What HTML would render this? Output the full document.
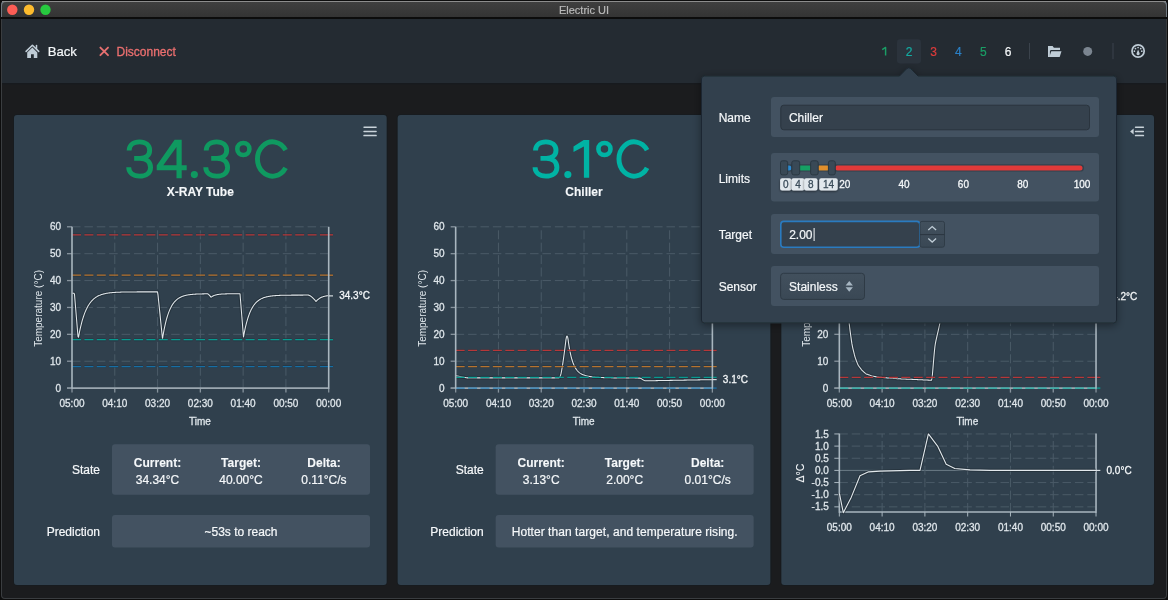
<!DOCTYPE html>
<html><head><meta charset="utf-8"><style>
html,body{margin:0;padding:0;width:1168px;height:600px;overflow:hidden;background:#0d0d0d;font-family:"Liberation Sans", sans-serif;}
text{font-family:"Liberation Sans", sans-serif;}
</style></head><body>
<svg width="1168" height="600" viewBox="0 0 1168 600" font-family='"Liberation Sans", sans-serif' style="position:absolute;left:0;top:0;will-change:transform"><defs><linearGradient id="tb" x1="0" y1="0" x2="0" y2="1"><stop offset="0" stop-color="#3f3f3f"/><stop offset="1" stop-color="#333333"/></linearGradient><filter id="pshadow" x="-10%" y="-10%" width="120%" height="130%"><feDropShadow dx="0" dy="2" stdDeviation="4" flood-color="#000" flood-opacity="0.4"/></filter><filter id="lshadow" x="-30%" y="-30%" width="160%" height="160%"><feDropShadow dx="0" dy="1" stdDeviation="0.8" flood-color="#000" flood-opacity="0.5"/></filter><linearGradient id="selg" x1="0" y1="0" x2="0" y2="1"><stop offset="0" stop-color="#42505d"/><stop offset="1" stop-color="#3a4855"/></linearGradient><clipPath id="c3clip"><rect x="781" y="322" width="380" height="260"/></clipPath></defs><rect x="0" y="0" width="1168" height="600" fill="#0d0d0d"/><rect x="1" y="1" width="1166" height="598" rx="4" fill="#3a3d40"/><rect x="2" y="2" width="1164" height="596" rx="3" fill="#1b1c1e"/><path d="M1,18 L1,5 Q1,1 5,1 L1163,1 Q1167,1 1167,5 L1167,18 Z" fill="#6f7880"/><path d="M2,18 L2,6 Q2,2 6,2 L1162,2 Q1166,2 1166,6 L1166,18 Z" fill="url(#tb)"/><rect x="2" y="1" width="1164" height="1" fill="#8c8c8c"/><rect x="1" y="17" width="1166" height="2" fill="#0c0c0c"/><circle cx="12.3" cy="9.8" r="5.2" fill="#fd5d55"/><circle cx="29.0" cy="9.8" r="5.2" fill="#fdbb2d"/><circle cx="45.5" cy="9.8" r="5.2" fill="#27c93f"/><text x="584" y="13.7" font-size="11" fill="#b9b9b9" stroke="#b9b9b9" stroke-width="0.2" text-anchor="middle" font-weight="normal" >Electric UI</text><rect x="2" y="19" width="1164" height="64" fill="#242b32"/><rect x="2" y="83" width="1164" height="1.2" fill="#171a1e"/><path d="M26.1,51.4 L32.4,45.3 L38.7,51.4" fill="none" stroke="#bfccd6" stroke-width="1.6" stroke-linecap="round" stroke-linejoin="round"/><path d="M36.5,45.4 L36.5,48.4" stroke="#bfccd6" stroke-width="1.5" stroke-linecap="round"/><path d="M27.2,52.4 L32.4,47.5 L37.3,52.4 L37.3,57.9 L33.8,57.9 L33.8,54.2 L31.0,54.2 L31.0,57.9 L27.2,57.9 Z" fill="#bfccd6"/><text x="47.7" y="56.3" font-size="13.6" fill="#f5f8fa" stroke="#f5f8fa" stroke-width="0.2" text-anchor="start" font-weight="normal" textLength="29.2" lengthAdjust="spacingAndGlyphs">Back</text><path d="M100.4,47.6 L108,55.2 M108,47.6 L100.4,55.2" stroke="#e57070" stroke-width="1.9" stroke-linecap="round"/><text x="116.5" y="55.6" font-size="12" fill="#eb6f6f" stroke="#eb6f6f" stroke-width="0.3" text-anchor="start" font-weight="normal" >Disconnect</text><rect x="897" y="39.3" width="24" height="24.2" rx="3" fill="#2b333c"/><path d="M885.6,55.6 L885.6,47.4 L882.2,49.6" fill="none" stroke="#1a9e66" stroke-width="1.45" stroke-linejoin="round"/><text x="909" y="55.6" font-size="12" fill="#14aca2" stroke="#14aca2" stroke-width="0.2" text-anchor="middle" font-weight="normal" >2</text><text x="933.7" y="55.6" font-size="12" fill="#db3b3b" stroke="#db3b3b" stroke-width="0.2" text-anchor="middle" font-weight="normal" >3</text><text x="958.4" y="55.6" font-size="12" fill="#2b80c6" stroke="#2b80c6" stroke-width="0.2" text-anchor="middle" font-weight="normal" >4</text><text x="983.4" y="55.6" font-size="12" fill="#1a9e66" stroke="#1a9e66" stroke-width="0.2" text-anchor="middle" font-weight="normal" >5</text><text x="1008" y="55.6" font-size="12" fill="#f5f8fa" stroke="#f5f8fa" stroke-width="0.2" text-anchor="middle" font-weight="normal" >6</text><rect x="1029" y="43" width="1" height="16.2" fill="#3b434c"/><rect x="1112.5" y="43" width="1" height="16.2" fill="#3b434c"/><path d="M1048,46 L1052.6,46 L1053.9,47.7 L1060,47.7 L1060,50.1 L1050.6,50.1 L1049.9,51.5 L1049.9,57 L1048,57 Z" fill="#bfccd6"/><path d="M1051.3,51.3 L1061.5,51.3 L1059.7,57 L1049.2,57 Z" fill="#bfccd6"/><circle cx="1087.7" cy="51.4" r="4.5" fill="#7b8590"/><circle cx="1138.1" cy="51" r="6.1" fill="none" stroke="#bfccd6" stroke-width="1.7"/><circle cx="1134.40" cy="51.20" r="0.85" fill="#bfccd6"/><circle cx="1135.48" cy="48.58" r="0.85" fill="#bfccd6"/><circle cx="1138.10" cy="47.50" r="0.85" fill="#bfccd6"/><circle cx="1140.72" cy="48.58" r="0.85" fill="#bfccd6"/><circle cx="1141.80" cy="51.20" r="0.85" fill="#bfccd6"/><path d="M1138.1,49.6 L1139.5,53.0 A1.6,1.6 0 1 1 1136.7,53.0 Z" fill="#bfccd6"/><rect x="13.5" y="114.5" width="373.67" height="471" rx="3.5" fill="none" stroke="#161b20" stroke-opacity="0.7" stroke-width="1"/><rect x="14.0" y="115" width="372.67" height="470" rx="3" fill="#30404d"/><rect x="397.17" y="114.5" width="373.67" height="471" rx="3.5" fill="none" stroke="#161b20" stroke-opacity="0.7" stroke-width="1"/><rect x="397.67" y="115" width="372.67" height="470" rx="3" fill="#30404d"/><rect x="780.83" y="114.5" width="373.67" height="471" rx="3.5" fill="none" stroke="#161b20" stroke-opacity="0.7" stroke-width="1"/><rect x="781.33" y="115" width="372.67" height="470" rx="3" fill="#30404d"/><rect x="363.3" y="126.55" width="13.5" height="1.5" rx="0.7" fill="#c9d3da"/><rect x="363.3" y="130.75" width="13.5" height="1.5" rx="0.7" fill="#c9d3da"/><rect x="363.3" y="134.85" width="13.5" height="1.5" rx="0.7" fill="#c9d3da"/><path d="M129.15,150.60 C129.15,145.00 133.65,141.85 139.55,141.85 C145.65,141.85 149.65,145.40 149.65,150.30 C149.65,155.30 145.85,158.40 139.85,158.40 L134.15,158.40 M139.85,158.40 C146.55,158.40 150.55,162.00 150.55,167.40 C150.55,172.90 146.15,176.15 139.55,176.15 C132.85,176.15 128.80,172.60 128.70,167.30" fill="none" stroke="#0f9960" stroke-width="4.9" stroke-linejoin="round"/><path d="M174.60,139.80 L181.70,139.80 L181.70,165.25 L186.70,165.25 L186.70,170.25 L181.70,170.25 L181.70,178.20 L176.50,178.20 L176.50,170.25 L156.70,170.25 L156.70,165.50 Z M176.50,147.00 L176.50,165.25 L163.30,165.25 Z" fill="#0f9960" fill-rule="evenodd"/><circle cx="194.35" cy="174.60" r="3.55" fill="#0f9960"/><path d="M206.20,150.60 C206.20,145.00 210.70,141.85 216.60,141.85 C222.70,141.85 226.70,145.40 226.70,150.30 C226.70,155.30 222.90,158.40 216.90,158.40 L211.20,158.40 M216.90,158.40 C223.60,158.40 227.60,162.00 227.60,167.40 C227.60,172.90 223.20,176.15 216.60,176.15 C209.90,176.15 205.85,172.60 205.75,167.30" fill="none" stroke="#0f9960" stroke-width="4.9" stroke-linejoin="round"/><circle cx="243.35" cy="149.00" r="6.05" fill="none" stroke="#0f9960" stroke-width="4.6"/><path d="M285.59,150.17 A15.15,17.15 0 1 0 285.59,167.83" fill="none" stroke="#0f9960" stroke-width="4.9"/><text x="200.3" y="196" font-size="12" fill="#f5f8fa" stroke="#f5f8fa" stroke-width="0.1" text-anchor="middle" font-weight="bold" >X-RAY Tube</text><line x1="67.0" y1="388.10" x2="72.0" y2="388.10" stroke="#87939d" stroke-width="1.3"/><text x="61.0" y="391.70000000000005" font-size="10" fill="#dfe6eb" stroke="#dfe6eb" stroke-width="0.28" text-anchor="end" font-weight="normal" >0</text><line x1="72.0" y1="361.22" x2="330.7" y2="361.22" stroke="#4a5a67" stroke-width="1" stroke-dasharray="8.5 3.9"/><line x1="67.0" y1="361.22" x2="72.0" y2="361.22" stroke="#87939d" stroke-width="1.3"/><text x="61.0" y="364.8166666666667" font-size="10" fill="#dfe6eb" stroke="#dfe6eb" stroke-width="0.28" text-anchor="end" font-weight="normal" >10</text><line x1="72.0" y1="334.33" x2="330.7" y2="334.33" stroke="#4a5a67" stroke-width="1" stroke-dasharray="8.5 3.9"/><line x1="67.0" y1="334.33" x2="72.0" y2="334.33" stroke="#87939d" stroke-width="1.3"/><text x="61.0" y="337.9333333333334" font-size="10" fill="#dfe6eb" stroke="#dfe6eb" stroke-width="0.28" text-anchor="end" font-weight="normal" >20</text><line x1="72.0" y1="307.45" x2="330.7" y2="307.45" stroke="#4a5a67" stroke-width="1" stroke-dasharray="8.5 3.9"/><line x1="67.0" y1="307.45" x2="72.0" y2="307.45" stroke="#87939d" stroke-width="1.3"/><text x="61.0" y="311.05000000000007" font-size="10" fill="#dfe6eb" stroke="#dfe6eb" stroke-width="0.28" text-anchor="end" font-weight="normal" >30</text><line x1="72.0" y1="280.57" x2="330.7" y2="280.57" stroke="#4a5a67" stroke-width="1" stroke-dasharray="8.5 3.9"/><line x1="67.0" y1="280.57" x2="72.0" y2="280.57" stroke="#87939d" stroke-width="1.3"/><text x="61.0" y="284.16666666666674" font-size="10" fill="#dfe6eb" stroke="#dfe6eb" stroke-width="0.28" text-anchor="end" font-weight="normal" >40</text><line x1="72.0" y1="253.68" x2="330.7" y2="253.68" stroke="#4a5a67" stroke-width="1" stroke-dasharray="8.5 3.9"/><line x1="67.0" y1="253.68" x2="72.0" y2="253.68" stroke="#87939d" stroke-width="1.3"/><text x="61.0" y="257.28333333333336" font-size="10" fill="#dfe6eb" stroke="#dfe6eb" stroke-width="0.28" text-anchor="end" font-weight="normal" >50</text><line x1="72.0" y1="226.80" x2="330.7" y2="226.80" stroke="#4a5a67" stroke-width="1" stroke-dasharray="8.5 3.9"/><line x1="67.0" y1="226.80" x2="72.0" y2="226.80" stroke="#87939d" stroke-width="1.3"/><text x="61.0" y="230.4" font-size="10" fill="#dfe6eb" stroke="#dfe6eb" stroke-width="0.28" text-anchor="end" font-weight="normal" >60</text><line x1="72.00" y1="388.1" x2="72.00" y2="392.6" stroke="#87939d" stroke-width="1.3"/><line x1="114.78" y1="388.1" x2="114.78" y2="226.8" stroke="#4a5a67" stroke-width="1" stroke-dasharray="9 3.4"/><line x1="114.78" y1="388.1" x2="114.78" y2="392.6" stroke="#87939d" stroke-width="1.3"/><line x1="157.57" y1="388.1" x2="157.57" y2="226.8" stroke="#4a5a67" stroke-width="1" stroke-dasharray="9 3.4"/><line x1="157.57" y1="388.1" x2="157.57" y2="392.6" stroke="#87939d" stroke-width="1.3"/><line x1="200.35" y1="388.1" x2="200.35" y2="226.8" stroke="#4a5a67" stroke-width="1" stroke-dasharray="9 3.4"/><line x1="200.35" y1="388.1" x2="200.35" y2="392.6" stroke="#87939d" stroke-width="1.3"/><line x1="243.13" y1="388.1" x2="243.13" y2="226.8" stroke="#4a5a67" stroke-width="1" stroke-dasharray="9 3.4"/><line x1="243.13" y1="388.1" x2="243.13" y2="392.6" stroke="#87939d" stroke-width="1.3"/><line x1="285.92" y1="388.1" x2="285.92" y2="226.8" stroke="#4a5a67" stroke-width="1" stroke-dasharray="9 3.4"/><line x1="285.92" y1="388.1" x2="285.92" y2="392.6" stroke="#87939d" stroke-width="1.3"/><line x1="328.70" y1="388.1" x2="328.70" y2="392.6" stroke="#87939d" stroke-width="1.3"/><text x="72.00" y="407.2" font-size="10" fill="#dfe6eb" stroke="#dfe6eb" stroke-width="0.28" text-anchor="middle" font-weight="normal" >05:00</text><text x="114.78" y="407.2" font-size="10" fill="#dfe6eb" stroke="#dfe6eb" stroke-width="0.28" text-anchor="middle" font-weight="normal" >04:10</text><text x="157.57" y="407.2" font-size="10" fill="#dfe6eb" stroke="#dfe6eb" stroke-width="0.28" text-anchor="middle" font-weight="normal" >03:20</text><text x="200.35" y="407.2" font-size="10" fill="#dfe6eb" stroke="#dfe6eb" stroke-width="0.28" text-anchor="middle" font-weight="normal" >02:30</text><text x="243.13" y="407.2" font-size="10" fill="#dfe6eb" stroke="#dfe6eb" stroke-width="0.28" text-anchor="middle" font-weight="normal" >01:40</text><text x="285.92" y="407.2" font-size="10" fill="#dfe6eb" stroke="#dfe6eb" stroke-width="0.28" text-anchor="middle" font-weight="normal" >00:50</text><text x="328.70" y="407.2" font-size="10" fill="#dfe6eb" stroke="#dfe6eb" stroke-width="0.28" text-anchor="middle" font-weight="normal" >00:00</text><line x1="67.0" y1="388.1" x2="72.0" y2="388.1" stroke="#87939d" stroke-width="1.6"/><line x1="72.0" y1="388.1" x2="328.7" y2="388.1" stroke="#9ba7b0" stroke-width="1.6"/><path d="M72.00,293.20 L72.50,293.20 L73.00,293.20 L73.50,293.20 L74.00,293.20 L74.50,294.40 L75.00,300.42 L75.50,306.43 L76.00,312.44 L76.50,318.46 L77.00,324.47 L77.50,330.48 L78.00,336.50 L78.50,337.21 L79.00,334.53 L79.50,332.01 L80.00,329.63 L80.50,327.40 L81.00,325.29 L81.50,323.32 L82.00,321.46 L82.50,319.70 L83.00,318.06 L83.50,316.51 L84.00,315.05 L84.50,313.68 L85.00,312.39 L85.50,311.17 L86.00,310.03 L86.50,308.96 L87.00,307.94 L87.50,306.99 L88.00,306.10 L88.50,305.25 L89.00,304.46 L89.50,303.72 L90.00,303.02 L90.50,302.36 L91.00,301.73 L91.50,301.15 L92.00,300.60 L92.50,300.08 L93.00,299.60 L93.50,299.14 L94.00,298.71 L94.50,298.30 L95.00,297.92 L95.50,297.56 L96.00,297.23 L96.50,296.91 L97.00,296.61 L97.50,296.33 L98.00,296.06 L98.50,295.81 L99.00,295.58 L99.50,295.36 L100.00,295.15 L100.50,294.96 L101.00,294.77 L101.50,294.60 L102.00,294.44 L102.50,294.29 L103.00,294.14 L103.50,294.01 L104.00,293.88 L104.50,293.76 L105.00,293.65 L105.50,293.54 L106.00,293.44 L106.50,293.35 L107.00,293.26 L107.50,293.18 L108.00,293.10 L108.50,293.03 L109.00,292.96 L109.50,292.89 L110.00,292.83 L110.50,292.77 L111.00,292.72 L111.50,292.67 L112.00,292.62 L112.50,292.58 L113.00,292.53 L113.50,292.49 L114.00,292.46 L114.50,292.42 L115.00,292.39 L115.50,292.36 L116.00,292.33 L116.50,292.30 L117.00,292.27 L117.50,292.25 L118.00,292.22 L118.50,292.20 L119.00,292.18 L119.50,292.16 L120.00,292.15 L120.50,292.13 L121.00,292.11 L121.50,292.10 L122.00,292.08 L122.50,292.07 L123.00,292.06 L123.50,292.05 L124.00,292.03 L124.50,292.02 L125.00,292.01 L125.50,292.00 L126.00,292.00 L126.50,291.99 L127.00,291.98 L127.50,291.97 L128.00,291.97 L128.50,291.96 L129.00,291.95 L129.50,291.95 L130.00,291.94 L130.50,291.94 L131.00,291.93 L131.50,291.93 L132.00,291.92 L132.50,291.92 L133.00,291.92 L133.50,291.91 L134.00,291.91 L134.50,291.91 L135.00,291.90 L135.50,291.90 L136.00,291.90 L136.50,291.90 L137.00,291.89 L137.50,291.89 L138.00,291.89 L138.50,291.89 L139.00,291.89 L139.50,291.88 L140.00,291.88 L140.50,291.88 L141.00,291.88 L141.50,291.88 L142.00,291.88 L142.50,291.88 L143.00,291.88 L143.50,291.87 L144.00,291.87 L144.50,291.87 L145.00,291.87 L145.50,291.87 L146.00,291.87 L146.50,291.87 L147.00,291.87 L147.50,291.87 L148.00,291.87 L148.50,291.87 L149.00,291.87 L149.50,291.87 L150.00,291.87 L150.50,291.86 L151.00,291.86 L151.50,291.86 L152.00,291.86 L152.50,291.86 L153.00,291.86 L153.50,291.86 L154.00,291.86 L154.50,291.86 L155.00,291.86 L155.50,291.86 L156.00,291.86 L156.50,291.86 L157.00,291.86 L157.50,291.86 L158.00,294.80 L158.50,299.70 L159.00,304.60 L159.50,309.50 L160.00,314.40 L160.50,319.30 L161.00,324.20 L161.50,329.10 L162.00,334.00 L162.50,338.90 L163.00,335.79 L163.50,332.89 L164.00,330.19 L164.50,327.68 L165.00,325.34 L165.50,323.16 L166.00,321.13 L166.50,319.24 L167.00,317.49 L167.50,315.85 L168.00,314.32 L168.50,312.91 L169.00,311.58 L169.50,310.35 L170.00,309.21 L170.50,308.14 L171.00,307.15 L171.50,306.23 L172.00,305.36 L172.50,304.56 L173.00,303.82 L173.50,303.12 L174.00,302.48 L174.50,301.87 L175.00,301.31 L175.50,300.79 L176.00,300.30 L176.50,299.85 L177.00,299.43 L177.50,299.04 L178.00,298.67 L178.50,298.33 L179.00,298.02 L179.50,297.72 L180.00,297.45 L180.50,297.19 L181.00,296.95 L181.50,296.73 L182.00,296.53 L182.50,296.33 L183.00,296.15 L183.50,295.99 L184.00,295.83 L184.50,295.69 L185.00,295.55 L185.50,295.43 L186.00,295.31 L186.50,295.20 L187.00,295.10 L187.50,295.01 L188.00,294.92 L188.50,294.84 L189.00,294.76 L189.50,294.69 L190.00,294.63 L190.50,294.57 L191.00,294.51 L191.50,294.46 L192.00,294.41 L192.50,294.36 L193.00,294.32 L193.50,294.28 L194.00,294.24 L194.50,294.21 L195.00,294.17 L195.50,294.14 L196.00,294.12 L196.50,294.09 L197.00,294.07 L197.50,294.04 L198.00,294.02 L198.50,294.00 L199.00,293.99 L199.50,293.97 L200.00,293.95 L200.50,293.94 L201.00,293.92 L201.50,293.91 L202.00,293.90 L202.50,293.89 L203.00,293.88 L203.50,293.87 L204.00,293.86 L204.50,293.85 L205.00,293.84 L205.50,293.84 L206.00,293.83 L206.50,293.82 L207.00,293.82 L207.50,293.81 L208.00,294.00 L208.50,294.34 L209.00,294.78 L209.50,295.30 L210.00,295.90 L210.50,296.56 L211.00,297.28 L211.50,296.91 L212.00,296.58 L212.50,296.28 L213.00,296.01 L213.50,295.78 L214.00,295.56 L214.50,295.37 L215.00,295.20 L215.50,295.05 L216.00,294.91 L216.50,294.79 L217.00,294.68 L217.50,294.58 L218.00,294.49 L218.50,294.41 L219.00,294.34 L219.50,294.28 L220.00,294.22 L220.50,294.17 L221.00,294.13 L221.50,294.09 L222.00,294.05 L222.50,294.02 L223.00,293.99 L223.50,293.96 L224.00,293.94 L224.50,293.92 L225.00,293.90 L225.50,293.88 L226.00,293.87 L226.50,293.86 L227.00,293.84 L227.50,293.83 L228.00,293.82 L228.50,293.81 L229.00,293.81 L229.50,293.80 L230.00,293.79 L230.50,293.79 L231.00,293.78 L231.50,293.78 L232.00,293.77 L232.50,293.77 L233.00,293.77 L233.50,293.76 L234.00,293.76 L234.50,293.76 L235.00,293.76 L235.50,293.76 L236.00,293.75 L236.50,293.75 L237.00,293.75 L237.50,293.75 L238.00,293.75 L238.50,293.75 L239.00,293.75 L239.50,293.75 L240.00,293.74 L240.50,299.92 L241.00,306.11 L241.50,312.29 L242.00,318.47 L242.50,324.66 L243.00,330.84 L243.50,337.02 L244.00,334.25 L244.50,331.65 L245.00,329.23 L245.50,326.97 L246.00,324.86 L246.50,322.89 L247.00,321.05 L247.50,319.33 L248.00,317.72 L248.50,316.23 L249.00,314.83 L249.50,313.52 L250.00,312.30 L250.50,311.16 L251.00,310.09 L251.50,309.10 L252.00,308.17 L252.50,307.31 L253.00,306.50 L253.50,305.74 L254.00,305.04 L254.50,304.38 L255.00,303.76 L255.50,303.19 L256.00,302.65 L256.50,302.15 L257.00,301.68 L257.50,301.25 L258.00,300.84 L258.50,300.46 L259.00,300.10 L259.50,299.77 L260.00,299.46 L260.50,299.17 L261.00,298.90 L261.50,298.65 L262.00,298.41 L262.50,298.19 L263.00,297.98 L263.50,297.79 L264.00,297.61 L264.50,297.45 L265.00,297.29 L265.50,297.14 L266.00,297.01 L266.50,296.88 L267.00,296.76 L267.50,296.65 L268.00,296.55 L268.50,296.45 L269.00,296.36 L269.50,296.27 L270.00,296.20 L270.50,296.12 L271.00,296.05 L271.50,295.99 L272.00,295.93 L272.50,295.87 L273.00,295.82 L273.50,295.77 L274.00,295.73 L274.50,295.68 L275.00,295.64 L275.50,295.61 L276.00,295.57 L276.50,295.54 L277.00,295.51 L277.50,295.48 L278.00,295.46 L278.50,295.43 L279.00,295.41 L279.50,295.39 L280.00,295.37 L280.50,295.35 L281.00,295.33 L281.50,295.31 L282.00,295.30 L282.50,295.28 L283.00,295.27 L283.50,295.26 L284.00,295.25 L284.50,295.24 L285.00,295.23 L285.50,295.22 L286.00,295.21 L286.50,295.20 L287.00,295.19 L287.50,295.18 L288.00,295.18 L288.50,295.17 L289.00,295.17 L289.50,295.16 L290.00,295.16 L290.50,295.15 L291.00,295.15 L291.50,295.14 L292.00,295.14 L292.50,295.13 L293.00,295.13 L293.50,295.13 L294.00,295.13 L294.50,295.12 L295.00,295.12 L295.50,295.12 L296.00,295.12 L296.50,295.11 L297.00,295.11 L297.50,295.11 L298.00,295.11 L298.50,295.11 L299.00,295.10 L299.50,295.10 L300.00,295.10 L300.50,295.10 L301.00,295.10 L301.50,295.10 L302.00,295.10 L302.50,295.10 L303.00,295.10 L303.50,295.09 L304.00,295.09 L304.50,295.09 L305.00,295.09 L305.50,295.09 L306.00,295.09 L306.50,295.09 L307.00,295.09 L307.50,295.09 L308.00,295.09 L308.50,295.12 L309.00,295.26 L309.50,295.48 L310.00,295.74 L310.50,296.05 L311.00,296.40 L311.50,296.78 L312.00,297.20 L312.50,297.64 L313.00,298.10 L313.50,298.60 L314.00,299.12 L314.50,299.66 L315.00,300.22 L315.50,300.81 L316.00,301.41 L316.50,301.04 L317.00,300.47 L317.50,299.96 L318.00,299.50 L318.50,299.08 L319.00,298.70 L319.50,298.35 L320.00,298.04 L320.50,297.76 L321.00,297.51 L321.50,297.28 L322.00,297.07 L322.50,296.88 L323.00,296.71 L323.50,296.55 L324.00,296.41 L324.50,296.29 L325.00,296.17 L325.50,296.07 L326.00,295.98 L326.50,295.89 L327.00,295.81 L327.50,295.74 L328.00,295.68 L328.50,295.62" fill="none" stroke="#1c2630" stroke-opacity="0.55" stroke-width="3.2" stroke-linejoin="round"/><path d="M72.00,293.20 L72.50,293.20 L73.00,293.20 L73.50,293.20 L74.00,293.20 L74.50,294.40 L75.00,300.42 L75.50,306.43 L76.00,312.44 L76.50,318.46 L77.00,324.47 L77.50,330.48 L78.00,336.50 L78.50,337.21 L79.00,334.53 L79.50,332.01 L80.00,329.63 L80.50,327.40 L81.00,325.29 L81.50,323.32 L82.00,321.46 L82.50,319.70 L83.00,318.06 L83.50,316.51 L84.00,315.05 L84.50,313.68 L85.00,312.39 L85.50,311.17 L86.00,310.03 L86.50,308.96 L87.00,307.94 L87.50,306.99 L88.00,306.10 L88.50,305.25 L89.00,304.46 L89.50,303.72 L90.00,303.02 L90.50,302.36 L91.00,301.73 L91.50,301.15 L92.00,300.60 L92.50,300.08 L93.00,299.60 L93.50,299.14 L94.00,298.71 L94.50,298.30 L95.00,297.92 L95.50,297.56 L96.00,297.23 L96.50,296.91 L97.00,296.61 L97.50,296.33 L98.00,296.06 L98.50,295.81 L99.00,295.58 L99.50,295.36 L100.00,295.15 L100.50,294.96 L101.00,294.77 L101.50,294.60 L102.00,294.44 L102.50,294.29 L103.00,294.14 L103.50,294.01 L104.00,293.88 L104.50,293.76 L105.00,293.65 L105.50,293.54 L106.00,293.44 L106.50,293.35 L107.00,293.26 L107.50,293.18 L108.00,293.10 L108.50,293.03 L109.00,292.96 L109.50,292.89 L110.00,292.83 L110.50,292.77 L111.00,292.72 L111.50,292.67 L112.00,292.62 L112.50,292.58 L113.00,292.53 L113.50,292.49 L114.00,292.46 L114.50,292.42 L115.00,292.39 L115.50,292.36 L116.00,292.33 L116.50,292.30 L117.00,292.27 L117.50,292.25 L118.00,292.22 L118.50,292.20 L119.00,292.18 L119.50,292.16 L120.00,292.15 L120.50,292.13 L121.00,292.11 L121.50,292.10 L122.00,292.08 L122.50,292.07 L123.00,292.06 L123.50,292.05 L124.00,292.03 L124.50,292.02 L125.00,292.01 L125.50,292.00 L126.00,292.00 L126.50,291.99 L127.00,291.98 L127.50,291.97 L128.00,291.97 L128.50,291.96 L129.00,291.95 L129.50,291.95 L130.00,291.94 L130.50,291.94 L131.00,291.93 L131.50,291.93 L132.00,291.92 L132.50,291.92 L133.00,291.92 L133.50,291.91 L134.00,291.91 L134.50,291.91 L135.00,291.90 L135.50,291.90 L136.00,291.90 L136.50,291.90 L137.00,291.89 L137.50,291.89 L138.00,291.89 L138.50,291.89 L139.00,291.89 L139.50,291.88 L140.00,291.88 L140.50,291.88 L141.00,291.88 L141.50,291.88 L142.00,291.88 L142.50,291.88 L143.00,291.88 L143.50,291.87 L144.00,291.87 L144.50,291.87 L145.00,291.87 L145.50,291.87 L146.00,291.87 L146.50,291.87 L147.00,291.87 L147.50,291.87 L148.00,291.87 L148.50,291.87 L149.00,291.87 L149.50,291.87 L150.00,291.87 L150.50,291.86 L151.00,291.86 L151.50,291.86 L152.00,291.86 L152.50,291.86 L153.00,291.86 L153.50,291.86 L154.00,291.86 L154.50,291.86 L155.00,291.86 L155.50,291.86 L156.00,291.86 L156.50,291.86 L157.00,291.86 L157.50,291.86 L158.00,294.80 L158.50,299.70 L159.00,304.60 L159.50,309.50 L160.00,314.40 L160.50,319.30 L161.00,324.20 L161.50,329.10 L162.00,334.00 L162.50,338.90 L163.00,335.79 L163.50,332.89 L164.00,330.19 L164.50,327.68 L165.00,325.34 L165.50,323.16 L166.00,321.13 L166.50,319.24 L167.00,317.49 L167.50,315.85 L168.00,314.32 L168.50,312.91 L169.00,311.58 L169.50,310.35 L170.00,309.21 L170.50,308.14 L171.00,307.15 L171.50,306.23 L172.00,305.36 L172.50,304.56 L173.00,303.82 L173.50,303.12 L174.00,302.48 L174.50,301.87 L175.00,301.31 L175.50,300.79 L176.00,300.30 L176.50,299.85 L177.00,299.43 L177.50,299.04 L178.00,298.67 L178.50,298.33 L179.00,298.02 L179.50,297.72 L180.00,297.45 L180.50,297.19 L181.00,296.95 L181.50,296.73 L182.00,296.53 L182.50,296.33 L183.00,296.15 L183.50,295.99 L184.00,295.83 L184.50,295.69 L185.00,295.55 L185.50,295.43 L186.00,295.31 L186.50,295.20 L187.00,295.10 L187.50,295.01 L188.00,294.92 L188.50,294.84 L189.00,294.76 L189.50,294.69 L190.00,294.63 L190.50,294.57 L191.00,294.51 L191.50,294.46 L192.00,294.41 L192.50,294.36 L193.00,294.32 L193.50,294.28 L194.00,294.24 L194.50,294.21 L195.00,294.17 L195.50,294.14 L196.00,294.12 L196.50,294.09 L197.00,294.07 L197.50,294.04 L198.00,294.02 L198.50,294.00 L199.00,293.99 L199.50,293.97 L200.00,293.95 L200.50,293.94 L201.00,293.92 L201.50,293.91 L202.00,293.90 L202.50,293.89 L203.00,293.88 L203.50,293.87 L204.00,293.86 L204.50,293.85 L205.00,293.84 L205.50,293.84 L206.00,293.83 L206.50,293.82 L207.00,293.82 L207.50,293.81 L208.00,294.00 L208.50,294.34 L209.00,294.78 L209.50,295.30 L210.00,295.90 L210.50,296.56 L211.00,297.28 L211.50,296.91 L212.00,296.58 L212.50,296.28 L213.00,296.01 L213.50,295.78 L214.00,295.56 L214.50,295.37 L215.00,295.20 L215.50,295.05 L216.00,294.91 L216.50,294.79 L217.00,294.68 L217.50,294.58 L218.00,294.49 L218.50,294.41 L219.00,294.34 L219.50,294.28 L220.00,294.22 L220.50,294.17 L221.00,294.13 L221.50,294.09 L222.00,294.05 L222.50,294.02 L223.00,293.99 L223.50,293.96 L224.00,293.94 L224.50,293.92 L225.00,293.90 L225.50,293.88 L226.00,293.87 L226.50,293.86 L227.00,293.84 L227.50,293.83 L228.00,293.82 L228.50,293.81 L229.00,293.81 L229.50,293.80 L230.00,293.79 L230.50,293.79 L231.00,293.78 L231.50,293.78 L232.00,293.77 L232.50,293.77 L233.00,293.77 L233.50,293.76 L234.00,293.76 L234.50,293.76 L235.00,293.76 L235.50,293.76 L236.00,293.75 L236.50,293.75 L237.00,293.75 L237.50,293.75 L238.00,293.75 L238.50,293.75 L239.00,293.75 L239.50,293.75 L240.00,293.74 L240.50,299.92 L241.00,306.11 L241.50,312.29 L242.00,318.47 L242.50,324.66 L243.00,330.84 L243.50,337.02 L244.00,334.25 L244.50,331.65 L245.00,329.23 L245.50,326.97 L246.00,324.86 L246.50,322.89 L247.00,321.05 L247.50,319.33 L248.00,317.72 L248.50,316.23 L249.00,314.83 L249.50,313.52 L250.00,312.30 L250.50,311.16 L251.00,310.09 L251.50,309.10 L252.00,308.17 L252.50,307.31 L253.00,306.50 L253.50,305.74 L254.00,305.04 L254.50,304.38 L255.00,303.76 L255.50,303.19 L256.00,302.65 L256.50,302.15 L257.00,301.68 L257.50,301.25 L258.00,300.84 L258.50,300.46 L259.00,300.10 L259.50,299.77 L260.00,299.46 L260.50,299.17 L261.00,298.90 L261.50,298.65 L262.00,298.41 L262.50,298.19 L263.00,297.98 L263.50,297.79 L264.00,297.61 L264.50,297.45 L265.00,297.29 L265.50,297.14 L266.00,297.01 L266.50,296.88 L267.00,296.76 L267.50,296.65 L268.00,296.55 L268.50,296.45 L269.00,296.36 L269.50,296.27 L270.00,296.20 L270.50,296.12 L271.00,296.05 L271.50,295.99 L272.00,295.93 L272.50,295.87 L273.00,295.82 L273.50,295.77 L274.00,295.73 L274.50,295.68 L275.00,295.64 L275.50,295.61 L276.00,295.57 L276.50,295.54 L277.00,295.51 L277.50,295.48 L278.00,295.46 L278.50,295.43 L279.00,295.41 L279.50,295.39 L280.00,295.37 L280.50,295.35 L281.00,295.33 L281.50,295.31 L282.00,295.30 L282.50,295.28 L283.00,295.27 L283.50,295.26 L284.00,295.25 L284.50,295.24 L285.00,295.23 L285.50,295.22 L286.00,295.21 L286.50,295.20 L287.00,295.19 L287.50,295.18 L288.00,295.18 L288.50,295.17 L289.00,295.17 L289.50,295.16 L290.00,295.16 L290.50,295.15 L291.00,295.15 L291.50,295.14 L292.00,295.14 L292.50,295.13 L293.00,295.13 L293.50,295.13 L294.00,295.13 L294.50,295.12 L295.00,295.12 L295.50,295.12 L296.00,295.12 L296.50,295.11 L297.00,295.11 L297.50,295.11 L298.00,295.11 L298.50,295.11 L299.00,295.10 L299.50,295.10 L300.00,295.10 L300.50,295.10 L301.00,295.10 L301.50,295.10 L302.00,295.10 L302.50,295.10 L303.00,295.10 L303.50,295.09 L304.00,295.09 L304.50,295.09 L305.00,295.09 L305.50,295.09 L306.00,295.09 L306.50,295.09 L307.00,295.09 L307.50,295.09 L308.00,295.09 L308.50,295.12 L309.00,295.26 L309.50,295.48 L310.00,295.74 L310.50,296.05 L311.00,296.40 L311.50,296.78 L312.00,297.20 L312.50,297.64 L313.00,298.10 L313.50,298.60 L314.00,299.12 L314.50,299.66 L315.00,300.22 L315.50,300.81 L316.00,301.41 L316.50,301.04 L317.00,300.47 L317.50,299.96 L318.00,299.50 L318.50,299.08 L319.00,298.70 L319.50,298.35 L320.00,298.04 L320.50,297.76 L321.00,297.51 L321.50,297.28 L322.00,297.07 L322.50,296.88 L323.00,296.71 L323.50,296.55 L324.00,296.41 L324.50,296.29 L325.00,296.17 L325.50,296.07 L326.00,295.98 L326.50,295.89 L327.00,295.81 L327.50,295.74 L328.00,295.68 L328.50,295.62" fill="none" stroke="#e2e8ec" stroke-width="1.05" stroke-linejoin="round"/><line x1="72.0" y1="234.87" x2="328.7" y2="234.87" stroke="#1e2c38" stroke-opacity="0.45" stroke-width="3" stroke-dasharray="9 3.4"/><line x1="328.7" y1="234.87" x2="333.0" y2="234.87" stroke="#1e2c38" stroke-opacity="0.45" stroke-width="3"/><line x1="72.0" y1="234.87" x2="328.7" y2="234.87" stroke="#db3737" stroke-opacity="0.8" stroke-width="1.3" stroke-dasharray="9 3.4"/><line x1="328.7" y1="234.87" x2="333.0" y2="234.87" stroke="#db3737" stroke-opacity="0.8" stroke-width="1.3"/><line x1="72.0" y1="275.19" x2="328.7" y2="275.19" stroke="#1e2c38" stroke-opacity="0.45" stroke-width="3" stroke-dasharray="9 3.4"/><line x1="328.7" y1="275.19" x2="333.0" y2="275.19" stroke="#1e2c38" stroke-opacity="0.45" stroke-width="3"/><line x1="72.0" y1="275.19" x2="328.7" y2="275.19" stroke="#d9822b" stroke-opacity="0.8" stroke-width="1.3" stroke-dasharray="9 3.4"/><line x1="328.7" y1="275.19" x2="333.0" y2="275.19" stroke="#d9822b" stroke-opacity="0.8" stroke-width="1.3"/><line x1="72.0" y1="339.71" x2="328.7" y2="339.71" stroke="#1e2c38" stroke-opacity="0.45" stroke-width="3" stroke-dasharray="9 3.4"/><line x1="328.7" y1="339.71" x2="333.0" y2="339.71" stroke="#1e2c38" stroke-opacity="0.45" stroke-width="3"/><line x1="72.0" y1="339.71" x2="328.7" y2="339.71" stroke="#00b3a4" stroke-opacity="0.8" stroke-width="1.3" stroke-dasharray="9 3.4"/><line x1="328.7" y1="339.71" x2="333.0" y2="339.71" stroke="#00b3a4" stroke-opacity="0.8" stroke-width="1.3"/><line x1="72.0" y1="366.59" x2="328.7" y2="366.59" stroke="#1e2c38" stroke-opacity="0.45" stroke-width="3" stroke-dasharray="9 3.4"/><line x1="328.7" y1="366.59" x2="333.0" y2="366.59" stroke="#1e2c38" stroke-opacity="0.45" stroke-width="3"/><line x1="72.0" y1="366.59" x2="328.7" y2="366.59" stroke="#137cbd" stroke-opacity="0.8" stroke-width="1.3" stroke-dasharray="9 3.4"/><line x1="328.7" y1="366.59" x2="333.0" y2="366.59" stroke="#137cbd" stroke-opacity="0.8" stroke-width="1.3"/><line x1="72.0" y1="226.8" x2="72.0" y2="388.8" stroke="#a9b6bf" stroke-width="1.6"/><line x1="328.7" y1="226.8" x2="328.7" y2="388.8" stroke="#a9b6bf" stroke-width="1.6"/><line x1="328.7" y1="295.89" x2="333.0" y2="295.89" stroke="#e2e8ec" stroke-width="1.1"/><text x="339.2" y="299.4901666666667" font-size="10" fill="#f5f8fa" stroke="#f5f8fa" stroke-width="0.28" text-anchor="start" font-weight="normal" >34.3°C</text><text x="0" y="0" font-size="10" fill="#dfe6eb" text-anchor="middle" transform="translate(42.3,308.45000000000005) rotate(-90)">Temperature (°C)</text><text x="200.0" y="425" font-size="10" fill="#dfe6eb" stroke="#dfe6eb" stroke-width="0.28" text-anchor="middle" font-weight="normal" >Time</text><path d="M535.50,150.60 C535.50,145.00 540.00,141.85 545.90,141.85 C552.00,141.85 556.00,145.40 556.00,150.30 C556.00,155.30 552.20,158.40 546.20,158.40 L540.50,158.40 M546.20,158.40 C552.90,158.40 556.90,162.00 556.90,167.40 C556.90,172.90 552.50,176.15 545.90,176.15 C539.20,176.15 535.15,172.60 535.05,167.30" fill="none" stroke="#00b3a4" stroke-width="4.9" stroke-linejoin="round"/><circle cx="567.85" cy="174.60" r="3.55" fill="#00b3a4"/><path d="M583.70,140.00 L589.20,140.00 L589.20,177.80 L583.90,177.80 L583.90,146.40 L573.50,152.00 L573.50,146.40 Z" fill="#00b3a4"/><circle cx="604.45" cy="149.00" r="6.05" fill="none" stroke="#00b3a4" stroke-width="4.6"/><path d="M647.09,150.17 A15.15,17.15 0 1 0 647.09,167.83" fill="none" stroke="#00b3a4" stroke-width="4.9"/><text x="583.97" y="196" font-size="12" fill="#f5f8fa" stroke="#f5f8fa" stroke-width="0.1" text-anchor="middle" font-weight="bold" >Chiller</text><line x1="450.67" y1="388.10" x2="455.67" y2="388.10" stroke="#87939d" stroke-width="1.3"/><text x="444.67" y="391.70000000000005" font-size="10" fill="#dfe6eb" stroke="#dfe6eb" stroke-width="0.28" text-anchor="end" font-weight="normal" >0</text><line x1="455.67" y1="361.22" x2="714.37" y2="361.22" stroke="#4a5a67" stroke-width="1" stroke-dasharray="8.5 3.9"/><line x1="450.67" y1="361.22" x2="455.67" y2="361.22" stroke="#87939d" stroke-width="1.3"/><text x="444.67" y="364.8166666666667" font-size="10" fill="#dfe6eb" stroke="#dfe6eb" stroke-width="0.28" text-anchor="end" font-weight="normal" >10</text><line x1="455.67" y1="334.33" x2="714.37" y2="334.33" stroke="#4a5a67" stroke-width="1" stroke-dasharray="8.5 3.9"/><line x1="450.67" y1="334.33" x2="455.67" y2="334.33" stroke="#87939d" stroke-width="1.3"/><text x="444.67" y="337.9333333333334" font-size="10" fill="#dfe6eb" stroke="#dfe6eb" stroke-width="0.28" text-anchor="end" font-weight="normal" >20</text><line x1="455.67" y1="307.45" x2="714.37" y2="307.45" stroke="#4a5a67" stroke-width="1" stroke-dasharray="8.5 3.9"/><line x1="450.67" y1="307.45" x2="455.67" y2="307.45" stroke="#87939d" stroke-width="1.3"/><text x="444.67" y="311.05000000000007" font-size="10" fill="#dfe6eb" stroke="#dfe6eb" stroke-width="0.28" text-anchor="end" font-weight="normal" >30</text><line x1="455.67" y1="280.57" x2="714.37" y2="280.57" stroke="#4a5a67" stroke-width="1" stroke-dasharray="8.5 3.9"/><line x1="450.67" y1="280.57" x2="455.67" y2="280.57" stroke="#87939d" stroke-width="1.3"/><text x="444.67" y="284.16666666666674" font-size="10" fill="#dfe6eb" stroke="#dfe6eb" stroke-width="0.28" text-anchor="end" font-weight="normal" >40</text><line x1="455.67" y1="253.68" x2="714.37" y2="253.68" stroke="#4a5a67" stroke-width="1" stroke-dasharray="8.5 3.9"/><line x1="450.67" y1="253.68" x2="455.67" y2="253.68" stroke="#87939d" stroke-width="1.3"/><text x="444.67" y="257.28333333333336" font-size="10" fill="#dfe6eb" stroke="#dfe6eb" stroke-width="0.28" text-anchor="end" font-weight="normal" >50</text><line x1="455.67" y1="226.80" x2="714.37" y2="226.80" stroke="#4a5a67" stroke-width="1" stroke-dasharray="8.5 3.9"/><line x1="450.67" y1="226.80" x2="455.67" y2="226.80" stroke="#87939d" stroke-width="1.3"/><text x="444.67" y="230.4" font-size="10" fill="#dfe6eb" stroke="#dfe6eb" stroke-width="0.28" text-anchor="end" font-weight="normal" >60</text><line x1="455.67" y1="388.1" x2="455.67" y2="392.6" stroke="#87939d" stroke-width="1.3"/><line x1="498.45" y1="388.1" x2="498.45" y2="226.8" stroke="#4a5a67" stroke-width="1" stroke-dasharray="9 3.4"/><line x1="498.45" y1="388.1" x2="498.45" y2="392.6" stroke="#87939d" stroke-width="1.3"/><line x1="541.24" y1="388.1" x2="541.24" y2="226.8" stroke="#4a5a67" stroke-width="1" stroke-dasharray="9 3.4"/><line x1="541.24" y1="388.1" x2="541.24" y2="392.6" stroke="#87939d" stroke-width="1.3"/><line x1="584.02" y1="388.1" x2="584.02" y2="226.8" stroke="#4a5a67" stroke-width="1" stroke-dasharray="9 3.4"/><line x1="584.02" y1="388.1" x2="584.02" y2="392.6" stroke="#87939d" stroke-width="1.3"/><line x1="626.80" y1="388.1" x2="626.80" y2="226.8" stroke="#4a5a67" stroke-width="1" stroke-dasharray="9 3.4"/><line x1="626.80" y1="388.1" x2="626.80" y2="392.6" stroke="#87939d" stroke-width="1.3"/><line x1="669.59" y1="388.1" x2="669.59" y2="226.8" stroke="#4a5a67" stroke-width="1" stroke-dasharray="9 3.4"/><line x1="669.59" y1="388.1" x2="669.59" y2="392.6" stroke="#87939d" stroke-width="1.3"/><line x1="712.37" y1="388.1" x2="712.37" y2="392.6" stroke="#87939d" stroke-width="1.3"/><text x="455.67" y="407.2" font-size="10" fill="#dfe6eb" stroke="#dfe6eb" stroke-width="0.28" text-anchor="middle" font-weight="normal" >05:00</text><text x="498.45" y="407.2" font-size="10" fill="#dfe6eb" stroke="#dfe6eb" stroke-width="0.28" text-anchor="middle" font-weight="normal" >04:10</text><text x="541.24" y="407.2" font-size="10" fill="#dfe6eb" stroke="#dfe6eb" stroke-width="0.28" text-anchor="middle" font-weight="normal" >03:20</text><text x="584.02" y="407.2" font-size="10" fill="#dfe6eb" stroke="#dfe6eb" stroke-width="0.28" text-anchor="middle" font-weight="normal" >02:30</text><text x="626.80" y="407.2" font-size="10" fill="#dfe6eb" stroke="#dfe6eb" stroke-width="0.28" text-anchor="middle" font-weight="normal" >01:40</text><text x="669.59" y="407.2" font-size="10" fill="#dfe6eb" stroke="#dfe6eb" stroke-width="0.28" text-anchor="middle" font-weight="normal" >00:50</text><text x="712.37" y="407.2" font-size="10" fill="#dfe6eb" stroke="#dfe6eb" stroke-width="0.28" text-anchor="middle" font-weight="normal" >00:00</text><line x1="450.67" y1="388.1" x2="455.67" y2="388.1" stroke="#87939d" stroke-width="1.6"/><line x1="455.67" y1="388.1" x2="712.37" y2="388.1" stroke="#9ba7b0" stroke-width="1.6"/><path d="M456.00,375.83 L456.50,375.88 L457.00,375.93 L457.50,376.03 L458.00,376.12 L458.50,376.22 L459.00,376.32 L459.50,376.42 L460.00,376.52 L460.50,376.61 L461.00,376.71 L461.50,376.81 L462.00,376.91 L462.50,377.00 L463.00,377.10 L463.50,377.20 L464.00,377.30 L464.50,377.40 L465.00,377.49 L465.50,377.59 L466.00,377.69 L466.50,377.77 L467.00,377.83 L467.50,377.86 L468.00,377.88 L468.50,377.88 L469.00,377.88 L469.50,377.88 L470.00,377.88 L470.50,377.88 L471.00,377.88 L471.50,377.88 L472.00,377.88 L472.50,377.88 L473.00,377.88 L473.50,377.88 L474.00,377.88 L474.50,377.88 L475.00,377.88 L475.50,377.88 L476.00,377.88 L476.50,377.88 L477.00,377.88 L477.50,377.88 L478.00,377.88 L478.50,377.88 L479.00,377.88 L479.50,377.88 L480.00,377.88 L480.50,377.88 L481.00,377.88 L481.50,377.88 L482.00,377.88 L482.50,377.88 L483.00,377.88 L483.50,377.88 L484.00,377.88 L484.50,377.88 L485.00,377.88 L485.50,377.88 L486.00,377.88 L486.50,377.88 L487.00,377.88 L487.50,377.88 L488.00,377.88 L488.50,377.88 L489.00,377.88 L489.50,377.88 L490.00,377.88 L490.50,377.88 L491.00,377.88 L491.50,377.88 L492.00,377.88 L492.50,377.88 L493.00,377.88 L493.50,377.88 L494.00,377.88 L494.50,377.88 L495.00,377.88 L495.50,377.88 L496.00,377.88 L496.50,377.88 L497.00,377.88 L497.50,377.88 L498.00,377.88 L498.50,377.88 L499.00,377.88 L499.50,377.88 L500.00,377.88 L500.50,377.88 L501.00,377.88 L501.50,377.88 L502.00,377.88 L502.50,377.88 L503.00,377.88 L503.50,377.88 L504.00,377.88 L504.50,377.88 L505.00,377.88 L505.50,377.88 L506.00,377.88 L506.50,377.88 L507.00,377.88 L507.50,377.88 L508.00,377.88 L508.50,377.88 L509.00,377.88 L509.50,377.88 L510.00,377.88 L510.50,377.88 L511.00,377.88 L511.50,377.88 L512.00,377.88 L512.50,377.88 L513.00,377.88 L513.50,377.88 L514.00,377.88 L514.50,377.88 L515.00,377.88 L515.50,377.88 L516.00,377.88 L516.50,377.88 L517.00,377.88 L517.50,377.88 L518.00,377.88 L518.50,377.88 L519.00,377.88 L519.50,377.88 L520.00,377.88 L520.50,377.88 L521.00,377.88 L521.50,377.88 L522.00,377.88 L522.50,377.88 L523.00,377.88 L523.50,377.88 L524.00,377.88 L524.50,377.88 L525.00,377.88 L525.50,377.88 L526.00,377.88 L526.50,377.88 L527.00,377.88 L527.50,377.88 L528.00,377.88 L528.50,377.88 L529.00,377.88 L529.50,377.88 L530.00,377.88 L530.50,377.88 L531.00,377.88 L531.50,377.88 L532.00,377.88 L532.50,377.88 L533.00,377.88 L533.50,377.88 L534.00,377.88 L534.50,377.88 L535.00,377.88 L535.50,377.88 L536.00,377.88 L536.50,377.88 L537.00,377.88 L537.50,377.88 L538.00,377.88 L538.50,377.88 L539.00,377.88 L539.50,377.88 L540.00,377.88 L540.50,377.88 L541.00,377.88 L541.50,377.88 L542.00,377.88 L542.50,377.88 L543.00,377.88 L543.50,377.88 L544.00,377.88 L544.50,377.88 L545.00,377.88 L545.50,377.88 L546.00,377.88 L546.50,377.88 L547.00,377.88 L547.50,377.88 L548.00,377.88 L548.50,377.88 L549.00,377.88 L549.50,377.88 L550.00,377.88 L550.50,377.88 L551.00,377.88 L551.50,377.88 L552.00,377.88 L552.50,377.88 L553.00,377.88 L553.50,377.88 L554.00,377.88 L554.50,377.88 L555.00,377.88 L555.50,377.88 L556.00,377.88 L556.50,377.88 L557.00,377.88 L557.50,377.88 L558.00,377.88 L558.50,377.88 L559.00,377.88 L559.50,377.58 L560.00,376.83 L560.50,375.56 L561.00,373.71 L561.50,371.25 L562.00,368.42 L562.50,365.35 L563.00,362.08 L563.50,358.62 L564.00,355.02 L564.50,351.27 L565.00,347.39 L565.50,343.39 L566.00,339.28 L566.50,336.84 L567.00,336.01 L567.50,336.72 L568.00,338.93 L568.50,342.59 L569.00,345.89 L569.50,348.85 L570.00,351.51 L570.50,353.91 L571.00,356.07 L571.50,358.02 L572.00,359.78 L572.50,361.36 L573.00,362.79 L573.50,364.08 L574.00,365.25 L574.50,366.30 L575.00,367.26 L575.50,368.12 L576.00,368.91 L576.50,369.62 L577.00,370.26 L577.50,370.85 L578.00,371.38 L578.50,371.87 L579.00,372.31 L579.50,372.71 L580.00,373.08 L580.50,373.42 L581.00,373.72 L581.50,374.01 L582.00,374.27 L582.50,374.50 L583.00,374.72 L583.50,374.93 L584.00,375.11 L584.50,375.28 L585.00,375.44 L585.50,375.59 L586.00,375.73 L586.50,375.85 L587.00,375.97 L587.50,376.08 L588.00,376.18 L588.50,376.28 L589.00,376.37 L589.50,376.45 L590.00,376.53 L590.50,376.61 L591.00,376.68 L591.50,376.74 L592.00,376.80 L592.50,376.86 L593.00,376.92 L593.50,376.97 L594.00,377.02 L594.50,377.07 L595.00,377.11 L595.50,377.15 L596.00,377.19 L596.50,377.23 L597.00,377.27 L597.50,377.30 L598.00,377.34 L598.50,377.37 L599.00,377.40 L599.50,377.43 L600.00,377.45 L600.50,377.48 L601.00,377.51 L601.50,377.53 L602.00,377.55 L602.50,377.58 L603.00,377.60 L603.50,377.62 L604.00,377.64 L604.50,377.66 L605.00,377.67 L605.50,377.69 L606.00,377.71 L606.50,377.72 L607.00,377.74 L607.50,377.75 L608.00,377.77 L608.50,377.78 L609.00,377.80 L609.50,377.81 L610.00,377.82 L610.50,377.83 L611.00,377.84 L611.50,377.86 L612.00,377.87 L612.50,377.88 L613.00,377.89 L613.50,377.90 L614.00,377.90 L614.50,377.91 L615.00,377.92 L615.50,377.93 L616.00,377.94 L616.50,377.95 L617.00,377.95 L617.50,377.96 L618.00,377.97 L618.50,377.97 L619.00,377.98 L619.50,377.99 L620.00,377.99 L620.50,378.00 L621.00,378.00 L621.50,378.01 L622.00,378.01 L622.50,378.02 L623.00,378.02 L623.50,378.03 L624.00,378.03 L624.50,378.04 L625.00,378.04 L625.50,378.04 L626.00,378.05 L626.50,378.05 L627.00,378.06 L627.50,378.06 L628.00,378.06 L628.50,378.07 L629.00,378.07 L629.50,378.07 L630.00,378.07 L630.50,378.08 L631.00,378.08 L631.50,378.08 L632.00,378.08 L632.50,378.09 L633.00,378.09 L633.50,378.09 L634.00,378.09 L634.50,378.10 L635.00,378.10 L635.50,378.10 L636.00,378.10 L636.50,378.10 L637.00,378.11 L637.50,378.11 L638.00,378.11 L638.50,378.11 L639.00,378.11 L639.50,378.11 L640.00,378.18 L640.50,378.30 L641.00,378.50 L641.50,378.76 L642.00,379.09 L642.50,379.43 L643.00,379.77 L643.50,380.10 L644.00,380.38 L644.50,380.59 L645.00,380.74 L645.50,380.81 L646.00,380.82 L646.50,380.81 L647.00,380.80 L647.50,380.79 L648.00,380.78 L648.50,380.77 L649.00,380.76 L649.50,380.75 L650.00,380.75 L650.50,380.74 L651.00,380.73 L651.50,380.72 L652.00,380.71 L652.50,380.70 L653.00,380.69 L653.50,380.68 L654.00,380.67 L654.50,380.67 L655.00,380.66 L655.50,380.65 L656.00,380.64 L656.50,380.63 L657.00,380.62 L657.50,380.61 L658.00,380.60 L658.50,380.59 L659.00,380.59 L659.50,380.58 L660.00,380.57 L660.50,380.56 L661.00,380.55 L661.50,380.54 L662.00,380.53 L662.50,380.52 L663.00,380.51 L663.50,380.51 L664.00,380.50 L664.50,380.49 L665.00,380.48 L665.50,380.47 L666.00,380.46 L666.50,380.45 L667.00,380.44 L667.50,380.43 L668.00,380.43 L668.50,380.42 L669.00,380.41 L669.50,380.40 L670.00,380.39 L670.50,380.38 L671.00,380.37 L671.50,380.36 L672.00,380.35 L672.50,380.35 L673.00,380.34 L673.50,380.33 L674.00,380.32 L674.50,380.31 L675.00,380.30 L675.50,380.29 L676.00,380.28 L676.50,380.27 L677.00,380.27 L677.50,380.26 L678.00,380.25 L678.50,380.24 L679.00,380.23 L679.50,380.22 L680.00,380.21 L680.50,380.20 L681.00,380.19 L681.50,380.19 L682.00,380.18 L682.50,380.17 L683.00,380.16 L683.50,380.15 L684.00,380.14 L684.50,380.13 L685.00,380.12 L685.50,380.11 L686.00,380.10 L686.50,380.10 L687.00,380.09 L687.50,380.08 L688.00,380.07 L688.50,380.06 L689.00,380.05 L689.50,380.04 L690.00,380.03 L690.50,380.02 L691.00,380.02 L691.50,380.01 L692.00,380.00 L692.50,379.99 L693.00,379.98 L693.50,379.97 L694.00,379.96 L694.50,379.95 L695.00,379.94 L695.50,379.94 L696.00,379.93 L696.50,379.92 L697.00,379.91 L697.50,379.90 L698.00,379.89 L698.50,379.88 L699.00,379.87 L699.50,379.86 L700.00,379.86 L700.50,379.85 L701.00,379.84 L701.50,379.83 L702.00,379.82 L702.50,379.81 L703.00,379.80 L703.50,379.79 L704.00,379.78 L704.50,379.78 L705.00,379.77 L705.50,379.76 L706.00,379.75 L706.50,379.74 L707.00,379.73 L707.50,379.72 L708.00,379.71 L708.50,379.70 L709.00,379.70 L709.50,379.69 L710.00,379.68 L710.50,379.67 L711.00,379.66 L711.50,379.65 L712.00,379.65 L712.50,379.64" fill="none" stroke="#1c2630" stroke-opacity="0.55" stroke-width="3.2" stroke-linejoin="round"/><path d="M456.00,375.83 L456.50,375.88 L457.00,375.93 L457.50,376.03 L458.00,376.12 L458.50,376.22 L459.00,376.32 L459.50,376.42 L460.00,376.52 L460.50,376.61 L461.00,376.71 L461.50,376.81 L462.00,376.91 L462.50,377.00 L463.00,377.10 L463.50,377.20 L464.00,377.30 L464.50,377.40 L465.00,377.49 L465.50,377.59 L466.00,377.69 L466.50,377.77 L467.00,377.83 L467.50,377.86 L468.00,377.88 L468.50,377.88 L469.00,377.88 L469.50,377.88 L470.00,377.88 L470.50,377.88 L471.00,377.88 L471.50,377.88 L472.00,377.88 L472.50,377.88 L473.00,377.88 L473.50,377.88 L474.00,377.88 L474.50,377.88 L475.00,377.88 L475.50,377.88 L476.00,377.88 L476.50,377.88 L477.00,377.88 L477.50,377.88 L478.00,377.88 L478.50,377.88 L479.00,377.88 L479.50,377.88 L480.00,377.88 L480.50,377.88 L481.00,377.88 L481.50,377.88 L482.00,377.88 L482.50,377.88 L483.00,377.88 L483.50,377.88 L484.00,377.88 L484.50,377.88 L485.00,377.88 L485.50,377.88 L486.00,377.88 L486.50,377.88 L487.00,377.88 L487.50,377.88 L488.00,377.88 L488.50,377.88 L489.00,377.88 L489.50,377.88 L490.00,377.88 L490.50,377.88 L491.00,377.88 L491.50,377.88 L492.00,377.88 L492.50,377.88 L493.00,377.88 L493.50,377.88 L494.00,377.88 L494.50,377.88 L495.00,377.88 L495.50,377.88 L496.00,377.88 L496.50,377.88 L497.00,377.88 L497.50,377.88 L498.00,377.88 L498.50,377.88 L499.00,377.88 L499.50,377.88 L500.00,377.88 L500.50,377.88 L501.00,377.88 L501.50,377.88 L502.00,377.88 L502.50,377.88 L503.00,377.88 L503.50,377.88 L504.00,377.88 L504.50,377.88 L505.00,377.88 L505.50,377.88 L506.00,377.88 L506.50,377.88 L507.00,377.88 L507.50,377.88 L508.00,377.88 L508.50,377.88 L509.00,377.88 L509.50,377.88 L510.00,377.88 L510.50,377.88 L511.00,377.88 L511.50,377.88 L512.00,377.88 L512.50,377.88 L513.00,377.88 L513.50,377.88 L514.00,377.88 L514.50,377.88 L515.00,377.88 L515.50,377.88 L516.00,377.88 L516.50,377.88 L517.00,377.88 L517.50,377.88 L518.00,377.88 L518.50,377.88 L519.00,377.88 L519.50,377.88 L520.00,377.88 L520.50,377.88 L521.00,377.88 L521.50,377.88 L522.00,377.88 L522.50,377.88 L523.00,377.88 L523.50,377.88 L524.00,377.88 L524.50,377.88 L525.00,377.88 L525.50,377.88 L526.00,377.88 L526.50,377.88 L527.00,377.88 L527.50,377.88 L528.00,377.88 L528.50,377.88 L529.00,377.88 L529.50,377.88 L530.00,377.88 L530.50,377.88 L531.00,377.88 L531.50,377.88 L532.00,377.88 L532.50,377.88 L533.00,377.88 L533.50,377.88 L534.00,377.88 L534.50,377.88 L535.00,377.88 L535.50,377.88 L536.00,377.88 L536.50,377.88 L537.00,377.88 L537.50,377.88 L538.00,377.88 L538.50,377.88 L539.00,377.88 L539.50,377.88 L540.00,377.88 L540.50,377.88 L541.00,377.88 L541.50,377.88 L542.00,377.88 L542.50,377.88 L543.00,377.88 L543.50,377.88 L544.00,377.88 L544.50,377.88 L545.00,377.88 L545.50,377.88 L546.00,377.88 L546.50,377.88 L547.00,377.88 L547.50,377.88 L548.00,377.88 L548.50,377.88 L549.00,377.88 L549.50,377.88 L550.00,377.88 L550.50,377.88 L551.00,377.88 L551.50,377.88 L552.00,377.88 L552.50,377.88 L553.00,377.88 L553.50,377.88 L554.00,377.88 L554.50,377.88 L555.00,377.88 L555.50,377.88 L556.00,377.88 L556.50,377.88 L557.00,377.88 L557.50,377.88 L558.00,377.88 L558.50,377.88 L559.00,377.88 L559.50,377.58 L560.00,376.83 L560.50,375.56 L561.00,373.71 L561.50,371.25 L562.00,368.42 L562.50,365.35 L563.00,362.08 L563.50,358.62 L564.00,355.02 L564.50,351.27 L565.00,347.39 L565.50,343.39 L566.00,339.28 L566.50,336.84 L567.00,336.01 L567.50,336.72 L568.00,338.93 L568.50,342.59 L569.00,345.89 L569.50,348.85 L570.00,351.51 L570.50,353.91 L571.00,356.07 L571.50,358.02 L572.00,359.78 L572.50,361.36 L573.00,362.79 L573.50,364.08 L574.00,365.25 L574.50,366.30 L575.00,367.26 L575.50,368.12 L576.00,368.91 L576.50,369.62 L577.00,370.26 L577.50,370.85 L578.00,371.38 L578.50,371.87 L579.00,372.31 L579.50,372.71 L580.00,373.08 L580.50,373.42 L581.00,373.72 L581.50,374.01 L582.00,374.27 L582.50,374.50 L583.00,374.72 L583.50,374.93 L584.00,375.11 L584.50,375.28 L585.00,375.44 L585.50,375.59 L586.00,375.73 L586.50,375.85 L587.00,375.97 L587.50,376.08 L588.00,376.18 L588.50,376.28 L589.00,376.37 L589.50,376.45 L590.00,376.53 L590.50,376.61 L591.00,376.68 L591.50,376.74 L592.00,376.80 L592.50,376.86 L593.00,376.92 L593.50,376.97 L594.00,377.02 L594.50,377.07 L595.00,377.11 L595.50,377.15 L596.00,377.19 L596.50,377.23 L597.00,377.27 L597.50,377.30 L598.00,377.34 L598.50,377.37 L599.00,377.40 L599.50,377.43 L600.00,377.45 L600.50,377.48 L601.00,377.51 L601.50,377.53 L602.00,377.55 L602.50,377.58 L603.00,377.60 L603.50,377.62 L604.00,377.64 L604.50,377.66 L605.00,377.67 L605.50,377.69 L606.00,377.71 L606.50,377.72 L607.00,377.74 L607.50,377.75 L608.00,377.77 L608.50,377.78 L609.00,377.80 L609.50,377.81 L610.00,377.82 L610.50,377.83 L611.00,377.84 L611.50,377.86 L612.00,377.87 L612.50,377.88 L613.00,377.89 L613.50,377.90 L614.00,377.90 L614.50,377.91 L615.00,377.92 L615.50,377.93 L616.00,377.94 L616.50,377.95 L617.00,377.95 L617.50,377.96 L618.00,377.97 L618.50,377.97 L619.00,377.98 L619.50,377.99 L620.00,377.99 L620.50,378.00 L621.00,378.00 L621.50,378.01 L622.00,378.01 L622.50,378.02 L623.00,378.02 L623.50,378.03 L624.00,378.03 L624.50,378.04 L625.00,378.04 L625.50,378.04 L626.00,378.05 L626.50,378.05 L627.00,378.06 L627.50,378.06 L628.00,378.06 L628.50,378.07 L629.00,378.07 L629.50,378.07 L630.00,378.07 L630.50,378.08 L631.00,378.08 L631.50,378.08 L632.00,378.08 L632.50,378.09 L633.00,378.09 L633.50,378.09 L634.00,378.09 L634.50,378.10 L635.00,378.10 L635.50,378.10 L636.00,378.10 L636.50,378.10 L637.00,378.11 L637.50,378.11 L638.00,378.11 L638.50,378.11 L639.00,378.11 L639.50,378.11 L640.00,378.18 L640.50,378.30 L641.00,378.50 L641.50,378.76 L642.00,379.09 L642.50,379.43 L643.00,379.77 L643.50,380.10 L644.00,380.38 L644.50,380.59 L645.00,380.74 L645.50,380.81 L646.00,380.82 L646.50,380.81 L647.00,380.80 L647.50,380.79 L648.00,380.78 L648.50,380.77 L649.00,380.76 L649.50,380.75 L650.00,380.75 L650.50,380.74 L651.00,380.73 L651.50,380.72 L652.00,380.71 L652.50,380.70 L653.00,380.69 L653.50,380.68 L654.00,380.67 L654.50,380.67 L655.00,380.66 L655.50,380.65 L656.00,380.64 L656.50,380.63 L657.00,380.62 L657.50,380.61 L658.00,380.60 L658.50,380.59 L659.00,380.59 L659.50,380.58 L660.00,380.57 L660.50,380.56 L661.00,380.55 L661.50,380.54 L662.00,380.53 L662.50,380.52 L663.00,380.51 L663.50,380.51 L664.00,380.50 L664.50,380.49 L665.00,380.48 L665.50,380.47 L666.00,380.46 L666.50,380.45 L667.00,380.44 L667.50,380.43 L668.00,380.43 L668.50,380.42 L669.00,380.41 L669.50,380.40 L670.00,380.39 L670.50,380.38 L671.00,380.37 L671.50,380.36 L672.00,380.35 L672.50,380.35 L673.00,380.34 L673.50,380.33 L674.00,380.32 L674.50,380.31 L675.00,380.30 L675.50,380.29 L676.00,380.28 L676.50,380.27 L677.00,380.27 L677.50,380.26 L678.00,380.25 L678.50,380.24 L679.00,380.23 L679.50,380.22 L680.00,380.21 L680.50,380.20 L681.00,380.19 L681.50,380.19 L682.00,380.18 L682.50,380.17 L683.00,380.16 L683.50,380.15 L684.00,380.14 L684.50,380.13 L685.00,380.12 L685.50,380.11 L686.00,380.10 L686.50,380.10 L687.00,380.09 L687.50,380.08 L688.00,380.07 L688.50,380.06 L689.00,380.05 L689.50,380.04 L690.00,380.03 L690.50,380.02 L691.00,380.02 L691.50,380.01 L692.00,380.00 L692.50,379.99 L693.00,379.98 L693.50,379.97 L694.00,379.96 L694.50,379.95 L695.00,379.94 L695.50,379.94 L696.00,379.93 L696.50,379.92 L697.00,379.91 L697.50,379.90 L698.00,379.89 L698.50,379.88 L699.00,379.87 L699.50,379.86 L700.00,379.86 L700.50,379.85 L701.00,379.84 L701.50,379.83 L702.00,379.82 L702.50,379.81 L703.00,379.80 L703.50,379.79 L704.00,379.78 L704.50,379.78 L705.00,379.77 L705.50,379.76 L706.00,379.75 L706.50,379.74 L707.00,379.73 L707.50,379.72 L708.00,379.71 L708.50,379.70 L709.00,379.70 L709.50,379.69 L710.00,379.68 L710.50,379.67 L711.00,379.66 L711.50,379.65 L712.00,379.65 L712.50,379.64" fill="none" stroke="#e2e8ec" stroke-width="1.05" stroke-linejoin="round"/><line x1="455.67" y1="350.46" x2="712.37" y2="350.46" stroke="#1e2c38" stroke-opacity="0.45" stroke-width="3" stroke-dasharray="9 3.4"/><line x1="712.37" y1="350.46" x2="716.67" y2="350.46" stroke="#1e2c38" stroke-opacity="0.45" stroke-width="3"/><line x1="455.67" y1="350.46" x2="712.37" y2="350.46" stroke="#db3737" stroke-opacity="0.8" stroke-width="1.3" stroke-dasharray="9 3.4"/><line x1="712.37" y1="350.46" x2="716.67" y2="350.46" stroke="#db3737" stroke-opacity="0.8" stroke-width="1.3"/><line x1="455.67" y1="366.59" x2="712.37" y2="366.59" stroke="#1e2c38" stroke-opacity="0.45" stroke-width="3" stroke-dasharray="9 3.4"/><line x1="712.37" y1="366.59" x2="716.67" y2="366.59" stroke="#1e2c38" stroke-opacity="0.45" stroke-width="3"/><line x1="455.67" y1="366.59" x2="712.37" y2="366.59" stroke="#d9822b" stroke-opacity="0.8" stroke-width="1.3" stroke-dasharray="9 3.4"/><line x1="712.37" y1="366.59" x2="716.67" y2="366.59" stroke="#d9822b" stroke-opacity="0.8" stroke-width="1.3"/><line x1="455.67" y1="377.35" x2="712.37" y2="377.35" stroke="#1e2c38" stroke-opacity="0.45" stroke-width="3" stroke-dasharray="9 3.4"/><line x1="712.37" y1="377.35" x2="716.67" y2="377.35" stroke="#1e2c38" stroke-opacity="0.45" stroke-width="3"/><line x1="455.67" y1="377.35" x2="712.37" y2="377.35" stroke="#00b3a4" stroke-opacity="0.8" stroke-width="1.3" stroke-dasharray="9 3.4"/><line x1="712.37" y1="377.35" x2="716.67" y2="377.35" stroke="#00b3a4" stroke-opacity="0.8" stroke-width="1.3"/><line x1="455.67" y1="388.10" x2="712.37" y2="388.10" stroke="#137cbd" stroke-opacity="0.8" stroke-width="1.3" stroke-dasharray="9 3.4"/><line x1="712.37" y1="388.10" x2="716.67" y2="388.10" stroke="#137cbd" stroke-opacity="0.8" stroke-width="1.3"/><line x1="455.67" y1="226.8" x2="455.67" y2="388.8" stroke="#a9b6bf" stroke-width="1.6"/><line x1="712.37" y1="226.8" x2="712.37" y2="388.8" stroke="#a9b6bf" stroke-width="1.6"/><line x1="712.37" y1="379.63" x2="716.67" y2="379.63" stroke="#e2e8ec" stroke-width="1.1"/><text x="722.87" y="383.23175000000003" font-size="10" fill="#f5f8fa" stroke="#f5f8fa" stroke-width="0.28" text-anchor="start" font-weight="normal" >3.1°C</text><text x="0" y="0" font-size="10" fill="#dfe6eb" text-anchor="middle" transform="translate(425.97,308.45000000000005) rotate(-90)">Temperature (°C)</text><text x="583.6700000000001" y="425" font-size="10" fill="#dfe6eb" stroke="#dfe6eb" stroke-width="0.28" text-anchor="middle" font-weight="normal" >Time</text><rect x="1134.83" y="126.55" width="9.3" height="1.5" rx="0.7" fill="#c9d3da"/><rect x="1134.83" y="130.75" width="9.3" height="1.5" rx="0.7" fill="#c9d3da"/><rect x="1134.83" y="134.85" width="9.3" height="1.5" rx="0.7" fill="#c9d3da"/><path d="M1130.13,131.5 L1133.63,128.6 L1133.63,134.4 Z" fill="#c9d3da"/><line x1="834.33" y1="388.10" x2="839.33" y2="388.10" stroke="#87939d" stroke-width="1.3"/><text x="828.33" y="391.70000000000005" font-size="10" fill="#dfe6eb" stroke="#dfe6eb" stroke-width="0.28" text-anchor="end" font-weight="normal" >0</text><line x1="839.33" y1="361.22" x2="1098.03" y2="361.22" stroke="#4a5a67" stroke-width="1" stroke-dasharray="8.5 3.9"/><line x1="834.33" y1="361.22" x2="839.33" y2="361.22" stroke="#87939d" stroke-width="1.3"/><text x="828.33" y="364.8166666666667" font-size="10" fill="#dfe6eb" stroke="#dfe6eb" stroke-width="0.28" text-anchor="end" font-weight="normal" >10</text><line x1="839.33" y1="334.33" x2="1098.03" y2="334.33" stroke="#4a5a67" stroke-width="1" stroke-dasharray="8.5 3.9"/><line x1="834.33" y1="334.33" x2="839.33" y2="334.33" stroke="#87939d" stroke-width="1.3"/><text x="828.33" y="337.9333333333334" font-size="10" fill="#dfe6eb" stroke="#dfe6eb" stroke-width="0.28" text-anchor="end" font-weight="normal" >20</text><line x1="839.33" y1="307.45" x2="1098.03" y2="307.45" stroke="#4a5a67" stroke-width="1" stroke-dasharray="8.5 3.9"/><line x1="834.33" y1="307.45" x2="839.33" y2="307.45" stroke="#87939d" stroke-width="1.3"/><text x="828.33" y="311.05000000000007" font-size="10" fill="#dfe6eb" stroke="#dfe6eb" stroke-width="0.28" text-anchor="end" font-weight="normal" >30</text><line x1="839.33" y1="280.57" x2="1098.03" y2="280.57" stroke="#4a5a67" stroke-width="1" stroke-dasharray="8.5 3.9"/><line x1="834.33" y1="280.57" x2="839.33" y2="280.57" stroke="#87939d" stroke-width="1.3"/><text x="828.33" y="284.16666666666674" font-size="10" fill="#dfe6eb" stroke="#dfe6eb" stroke-width="0.28" text-anchor="end" font-weight="normal" >40</text><line x1="839.33" y1="253.68" x2="1098.03" y2="253.68" stroke="#4a5a67" stroke-width="1" stroke-dasharray="8.5 3.9"/><line x1="834.33" y1="253.68" x2="839.33" y2="253.68" stroke="#87939d" stroke-width="1.3"/><text x="828.33" y="257.28333333333336" font-size="10" fill="#dfe6eb" stroke="#dfe6eb" stroke-width="0.28" text-anchor="end" font-weight="normal" >50</text><line x1="839.33" y1="226.80" x2="1098.03" y2="226.80" stroke="#4a5a67" stroke-width="1" stroke-dasharray="8.5 3.9"/><line x1="834.33" y1="226.80" x2="839.33" y2="226.80" stroke="#87939d" stroke-width="1.3"/><text x="828.33" y="230.4" font-size="10" fill="#dfe6eb" stroke="#dfe6eb" stroke-width="0.28" text-anchor="end" font-weight="normal" >60</text><line x1="839.33" y1="388.1" x2="839.33" y2="392.6" stroke="#87939d" stroke-width="1.3"/><line x1="882.11" y1="388.1" x2="882.11" y2="226.8" stroke="#4a5a67" stroke-width="1" stroke-dasharray="9 3.4"/><line x1="882.11" y1="388.1" x2="882.11" y2="392.6" stroke="#87939d" stroke-width="1.3"/><line x1="924.90" y1="388.1" x2="924.90" y2="226.8" stroke="#4a5a67" stroke-width="1" stroke-dasharray="9 3.4"/><line x1="924.90" y1="388.1" x2="924.90" y2="392.6" stroke="#87939d" stroke-width="1.3"/><line x1="967.68" y1="388.1" x2="967.68" y2="226.8" stroke="#4a5a67" stroke-width="1" stroke-dasharray="9 3.4"/><line x1="967.68" y1="388.1" x2="967.68" y2="392.6" stroke="#87939d" stroke-width="1.3"/><line x1="1010.46" y1="388.1" x2="1010.46" y2="226.8" stroke="#4a5a67" stroke-width="1" stroke-dasharray="9 3.4"/><line x1="1010.46" y1="388.1" x2="1010.46" y2="392.6" stroke="#87939d" stroke-width="1.3"/><line x1="1053.25" y1="388.1" x2="1053.25" y2="226.8" stroke="#4a5a67" stroke-width="1" stroke-dasharray="9 3.4"/><line x1="1053.25" y1="388.1" x2="1053.25" y2="392.6" stroke="#87939d" stroke-width="1.3"/><line x1="1096.03" y1="388.1" x2="1096.03" y2="392.6" stroke="#87939d" stroke-width="1.3"/><text x="839.33" y="407.2" font-size="10" fill="#dfe6eb" stroke="#dfe6eb" stroke-width="0.28" text-anchor="middle" font-weight="normal" >05:00</text><text x="882.11" y="407.2" font-size="10" fill="#dfe6eb" stroke="#dfe6eb" stroke-width="0.28" text-anchor="middle" font-weight="normal" >04:10</text><text x="924.90" y="407.2" font-size="10" fill="#dfe6eb" stroke="#dfe6eb" stroke-width="0.28" text-anchor="middle" font-weight="normal" >03:20</text><text x="967.68" y="407.2" font-size="10" fill="#dfe6eb" stroke="#dfe6eb" stroke-width="0.28" text-anchor="middle" font-weight="normal" >02:30</text><text x="1010.46" y="407.2" font-size="10" fill="#dfe6eb" stroke="#dfe6eb" stroke-width="0.28" text-anchor="middle" font-weight="normal" >01:40</text><text x="1053.25" y="407.2" font-size="10" fill="#dfe6eb" stroke="#dfe6eb" stroke-width="0.28" text-anchor="middle" font-weight="normal" >00:50</text><text x="1096.03" y="407.2" font-size="10" fill="#dfe6eb" stroke="#dfe6eb" stroke-width="0.28" text-anchor="middle" font-weight="normal" >00:00</text><line x1="834.33" y1="388.1" x2="839.33" y2="388.1" stroke="#87939d" stroke-width="1.6"/><line x1="839.33" y1="388.1" x2="1096.03" y2="388.1" stroke="#9ba7b0" stroke-width="1.6"/><path d="M839.40,202.77 L839.90,205.62 L840.40,211.32 L840.90,217.02 L841.40,222.73 L841.90,228.43 L842.40,234.13 L842.90,239.83 L843.40,245.54 L843.90,251.24 L844.40,256.94 L844.90,262.64 L845.40,268.35 L845.90,274.64 L846.40,281.68 L846.90,289.47 L847.40,297.40 L847.90,305.33 L848.40,313.26 L848.90,320.05 L849.40,325.43 L849.90,329.39 L850.40,333.06 L850.90,336.73 L851.40,340.41 L851.90,343.65 L852.40,346.36 L852.90,348.53 L853.40,350.59 L853.90,352.65 L854.40,354.71 L854.90,356.57 L855.40,358.17 L855.90,359.52 L856.40,360.82 L856.90,362.12 L857.40,363.42 L857.90,364.55 L858.40,365.48 L858.90,366.19 L859.40,366.86 L859.90,367.53 L860.40,368.21 L860.90,368.88 L861.40,369.55 L861.90,370.16 L862.40,370.69 L862.90,371.14 L863.40,371.58 L863.90,372.02 L864.40,372.45 L864.90,372.89 L865.40,373.33 L865.90,373.70 L866.40,373.98 L866.90,374.17 L867.40,374.35 L867.90,374.53 L868.40,374.71 L868.90,374.89 L869.40,375.07 L869.90,375.25 L870.40,375.43 L870.90,375.61 L871.40,375.79 L871.90,375.94 L872.40,376.07 L872.90,376.16 L873.40,376.25 L873.90,376.34 L874.40,376.43 L874.90,376.52 L875.40,376.61 L875.90,376.70 L876.40,376.79 L876.90,376.88 L877.40,376.97 L877.90,377.05 L878.40,377.11 L878.90,377.16 L879.40,377.20 L879.90,377.25 L880.40,377.29 L880.90,377.34 L881.40,377.38 L881.90,377.43 L882.40,377.47 L882.90,377.52 L883.40,377.56 L883.90,377.61 L884.40,377.65 L884.90,377.70 L885.40,377.74 L885.90,377.79 L886.40,377.83 L886.90,377.88 L887.40,377.92 L887.90,377.96 L888.40,378.01 L888.90,378.05 L889.40,378.10 L889.90,378.14 L890.40,378.18 L890.90,378.21 L891.40,378.25 L891.90,378.28 L892.40,378.31 L892.90,378.35 L893.40,378.38 L893.90,378.42 L894.40,378.45 L894.90,378.48 L895.40,378.52 L895.90,378.55 L896.40,378.58 L896.90,378.62 L897.40,378.65 L897.90,378.68 L898.40,378.72 L898.90,378.75 L899.40,378.78 L899.90,378.82 L900.40,378.85 L900.90,378.89 L901.40,378.92 L901.90,378.95 L902.40,378.98 L902.90,379.00 L903.40,379.02 L903.90,379.04 L904.40,379.06 L904.90,379.08 L905.40,379.10 L905.90,379.12 L906.40,379.14 L906.90,379.16 L907.40,379.18 L907.90,379.20 L908.40,379.22 L908.90,379.25 L909.40,379.27 L909.90,379.29 L910.40,379.31 L910.90,379.33 L911.40,379.35 L911.90,379.37 L912.40,379.39 L912.90,379.41 L913.40,379.43 L913.90,379.45 L914.40,379.47 L914.90,379.49 L915.40,379.52 L915.90,379.54 L916.40,379.56 L916.90,379.59 L917.40,379.61 L917.90,379.63 L918.40,379.66 L918.90,379.68 L919.40,379.71 L919.90,379.73 L920.40,379.75 L920.90,379.78 L921.40,379.80 L921.90,379.82 L922.40,379.85 L922.90,379.87 L923.40,379.90 L923.90,379.92 L924.40,379.94 L924.90,379.97 L925.40,379.99 L925.90,380.01 L926.40,380.04 L926.90,380.06 L927.40,380.09 L927.90,380.11 L928.40,380.13 L928.90,380.16 L929.40,380.18 L929.90,380.20 L930.40,380.23 L930.90,380.25 L931.40,380.28 L931.90,378.60 L932.40,374.79 L932.90,368.85 L933.40,362.73 L933.90,356.90 L934.40,351.38 L934.90,346.78 L935.40,343.27 L935.90,340.85 L936.40,338.65 L936.90,336.44 L937.40,334.24 L937.90,332.03 L938.40,329.83 L938.90,327.62 L939.40,325.42 L939.90,322.86 L940.40,319.87 L940.90,316.44 L941.40,312.93 L941.90,309.41 L942.40,305.89 L942.90,302.37 L943.40,298.86 L943.90,295.34 L944.40,291.82 L944.90,288.30 L945.40,284.79 L945.90,283.03" fill="none" stroke="#1c2630" stroke-opacity="0.55" stroke-width="3.2" stroke-linejoin="round"/><path d="M839.40,202.77 L839.90,205.62 L840.40,211.32 L840.90,217.02 L841.40,222.73 L841.90,228.43 L842.40,234.13 L842.90,239.83 L843.40,245.54 L843.90,251.24 L844.40,256.94 L844.90,262.64 L845.40,268.35 L845.90,274.64 L846.40,281.68 L846.90,289.47 L847.40,297.40 L847.90,305.33 L848.40,313.26 L848.90,320.05 L849.40,325.43 L849.90,329.39 L850.40,333.06 L850.90,336.73 L851.40,340.41 L851.90,343.65 L852.40,346.36 L852.90,348.53 L853.40,350.59 L853.90,352.65 L854.40,354.71 L854.90,356.57 L855.40,358.17 L855.90,359.52 L856.40,360.82 L856.90,362.12 L857.40,363.42 L857.90,364.55 L858.40,365.48 L858.90,366.19 L859.40,366.86 L859.90,367.53 L860.40,368.21 L860.90,368.88 L861.40,369.55 L861.90,370.16 L862.40,370.69 L862.90,371.14 L863.40,371.58 L863.90,372.02 L864.40,372.45 L864.90,372.89 L865.40,373.33 L865.90,373.70 L866.40,373.98 L866.90,374.17 L867.40,374.35 L867.90,374.53 L868.40,374.71 L868.90,374.89 L869.40,375.07 L869.90,375.25 L870.40,375.43 L870.90,375.61 L871.40,375.79 L871.90,375.94 L872.40,376.07 L872.90,376.16 L873.40,376.25 L873.90,376.34 L874.40,376.43 L874.90,376.52 L875.40,376.61 L875.90,376.70 L876.40,376.79 L876.90,376.88 L877.40,376.97 L877.90,377.05 L878.40,377.11 L878.90,377.16 L879.40,377.20 L879.90,377.25 L880.40,377.29 L880.90,377.34 L881.40,377.38 L881.90,377.43 L882.40,377.47 L882.90,377.52 L883.40,377.56 L883.90,377.61 L884.40,377.65 L884.90,377.70 L885.40,377.74 L885.90,377.79 L886.40,377.83 L886.90,377.88 L887.40,377.92 L887.90,377.96 L888.40,378.01 L888.90,378.05 L889.40,378.10 L889.90,378.14 L890.40,378.18 L890.90,378.21 L891.40,378.25 L891.90,378.28 L892.40,378.31 L892.90,378.35 L893.40,378.38 L893.90,378.42 L894.40,378.45 L894.90,378.48 L895.40,378.52 L895.90,378.55 L896.40,378.58 L896.90,378.62 L897.40,378.65 L897.90,378.68 L898.40,378.72 L898.90,378.75 L899.40,378.78 L899.90,378.82 L900.40,378.85 L900.90,378.89 L901.40,378.92 L901.90,378.95 L902.40,378.98 L902.90,379.00 L903.40,379.02 L903.90,379.04 L904.40,379.06 L904.90,379.08 L905.40,379.10 L905.90,379.12 L906.40,379.14 L906.90,379.16 L907.40,379.18 L907.90,379.20 L908.40,379.22 L908.90,379.25 L909.40,379.27 L909.90,379.29 L910.40,379.31 L910.90,379.33 L911.40,379.35 L911.90,379.37 L912.40,379.39 L912.90,379.41 L913.40,379.43 L913.90,379.45 L914.40,379.47 L914.90,379.49 L915.40,379.52 L915.90,379.54 L916.40,379.56 L916.90,379.59 L917.40,379.61 L917.90,379.63 L918.40,379.66 L918.90,379.68 L919.40,379.71 L919.90,379.73 L920.40,379.75 L920.90,379.78 L921.40,379.80 L921.90,379.82 L922.40,379.85 L922.90,379.87 L923.40,379.90 L923.90,379.92 L924.40,379.94 L924.90,379.97 L925.40,379.99 L925.90,380.01 L926.40,380.04 L926.90,380.06 L927.40,380.09 L927.90,380.11 L928.40,380.13 L928.90,380.16 L929.40,380.18 L929.90,380.20 L930.40,380.23 L930.90,380.25 L931.40,380.28 L931.90,378.60 L932.40,374.79 L932.90,368.85 L933.40,362.73 L933.90,356.90 L934.40,351.38 L934.90,346.78 L935.40,343.27 L935.90,340.85 L936.40,338.65 L936.90,336.44 L937.40,334.24 L937.90,332.03 L938.40,329.83 L938.90,327.62 L939.40,325.42 L939.90,322.86 L940.40,319.87 L940.90,316.44 L941.40,312.93 L941.90,309.41 L942.40,305.89 L942.90,302.37 L943.40,298.86 L943.90,295.34 L944.40,291.82 L944.90,288.30 L945.40,284.79 L945.90,283.03" fill="none" stroke="#e2e8ec" stroke-width="1.05" stroke-linejoin="round"/><line x1="839.33" y1="377.35" x2="1096.03" y2="377.35" stroke="#1e2c38" stroke-opacity="0.45" stroke-width="3" stroke-dasharray="9 3.4"/><line x1="1096.03" y1="377.35" x2="1100.33" y2="377.35" stroke="#1e2c38" stroke-opacity="0.45" stroke-width="3"/><line x1="839.33" y1="377.35" x2="1096.03" y2="377.35" stroke="#db3737" stroke-opacity="0.8" stroke-width="1.3" stroke-dasharray="9 3.4"/><line x1="1096.03" y1="377.35" x2="1100.33" y2="377.35" stroke="#db3737" stroke-opacity="0.8" stroke-width="1.3"/><line x1="839.33" y1="388.10" x2="1096.03" y2="388.10" stroke="#00b3a4" stroke-opacity="0.8" stroke-width="1.3" stroke-dasharray="9 3.4"/><line x1="1096.03" y1="388.10" x2="1100.33" y2="388.10" stroke="#00b3a4" stroke-opacity="0.8" stroke-width="1.3"/><line x1="839.33" y1="226.8" x2="839.33" y2="388.8" stroke="#a9b6bf" stroke-width="1.6"/><line x1="1096.03" y1="226.8" x2="1096.03" y2="388.8" stroke="#a9b6bf" stroke-width="1.6"/><line x1="1096.03" y1="296.16" x2="1100.33" y2="296.16" stroke="#e2e8ec" stroke-width="1.1"/><text x="1106.53" y="299.759" font-size="10" fill="#f5f8fa" stroke="#f5f8fa" stroke-width="0.28" text-anchor="start" font-weight="normal" >34.2°C</text><text x="0" y="0" font-size="10" fill="#dfe6eb" text-anchor="middle" transform="translate(809.63,308.45000000000005) rotate(-90)">Temperature (°C)</text><text x="967.33" y="425" font-size="10" fill="#dfe6eb" stroke="#dfe6eb" stroke-width="0.28" text-anchor="middle" font-weight="normal" >Time</text><line x1="839.33" y1="433.95" x2="1096.03" y2="433.95" stroke="#4a5a67" stroke-width="1" stroke-dasharray="8.5 3.9"/><line x1="834.33" y1="433.95" x2="839.33" y2="433.95" stroke="#a9b6bf" stroke-width="1"/><text x="828.83" y="437.55" font-size="10" fill="#dfe6eb" stroke="#dfe6eb" stroke-width="0.28" text-anchor="end" font-weight="normal" >1.5</text><line x1="839.33" y1="446.10" x2="1096.03" y2="446.10" stroke="#4a5a67" stroke-width="1" stroke-dasharray="8.5 3.9"/><line x1="834.33" y1="446.10" x2="839.33" y2="446.10" stroke="#a9b6bf" stroke-width="1"/><text x="828.83" y="449.7" font-size="10" fill="#dfe6eb" stroke="#dfe6eb" stroke-width="0.28" text-anchor="end" font-weight="normal" >1.0</text><line x1="839.33" y1="458.25" x2="1096.03" y2="458.25" stroke="#4a5a67" stroke-width="1" stroke-dasharray="8.5 3.9"/><line x1="834.33" y1="458.25" x2="839.33" y2="458.25" stroke="#a9b6bf" stroke-width="1"/><text x="828.83" y="461.85" font-size="10" fill="#dfe6eb" stroke="#dfe6eb" stroke-width="0.28" text-anchor="end" font-weight="normal" >0.5</text><line x1="839.33" y1="470.40" x2="1096.03" y2="470.40" stroke="#6c7b87" stroke-width="1"/><line x1="834.33" y1="470.40" x2="839.33" y2="470.40" stroke="#a9b6bf" stroke-width="1"/><text x="828.83" y="474.0" font-size="10" fill="#dfe6eb" stroke="#dfe6eb" stroke-width="0.28" text-anchor="end" font-weight="normal" >0.0</text><line x1="839.33" y1="482.55" x2="1096.03" y2="482.55" stroke="#4a5a67" stroke-width="1" stroke-dasharray="8.5 3.9"/><line x1="834.33" y1="482.55" x2="839.33" y2="482.55" stroke="#a9b6bf" stroke-width="1"/><text x="828.83" y="486.15" font-size="10" fill="#dfe6eb" stroke="#dfe6eb" stroke-width="0.28" text-anchor="end" font-weight="normal" >-0.5</text><line x1="839.33" y1="494.70" x2="1096.03" y2="494.70" stroke="#4a5a67" stroke-width="1" stroke-dasharray="8.5 3.9"/><line x1="834.33" y1="494.70" x2="839.33" y2="494.70" stroke="#a9b6bf" stroke-width="1"/><text x="828.83" y="498.3" font-size="10" fill="#dfe6eb" stroke="#dfe6eb" stroke-width="0.28" text-anchor="end" font-weight="normal" >-1.0</text><line x1="839.33" y1="506.85" x2="1096.03" y2="506.85" stroke="#4a5a67" stroke-width="1" stroke-dasharray="8.5 3.9"/><line x1="834.33" y1="506.85" x2="839.33" y2="506.85" stroke="#a9b6bf" stroke-width="1"/><text x="828.83" y="510.45" font-size="10" fill="#dfe6eb" stroke="#dfe6eb" stroke-width="0.28" text-anchor="end" font-weight="normal" >-1.5</text><line x1="839.33" y1="512" x2="839.33" y2="516.5" stroke="#a9b6bf" stroke-width="1"/><line x1="882.11" y1="512" x2="882.11" y2="433.6" stroke="#4a5a67" stroke-width="1" stroke-dasharray="9 3.4"/><line x1="882.11" y1="512" x2="882.11" y2="516.5" stroke="#a9b6bf" stroke-width="1"/><line x1="924.90" y1="512" x2="924.90" y2="433.6" stroke="#4a5a67" stroke-width="1" stroke-dasharray="9 3.4"/><line x1="924.90" y1="512" x2="924.90" y2="516.5" stroke="#a9b6bf" stroke-width="1"/><line x1="967.68" y1="512" x2="967.68" y2="433.6" stroke="#4a5a67" stroke-width="1" stroke-dasharray="9 3.4"/><line x1="967.68" y1="512" x2="967.68" y2="516.5" stroke="#a9b6bf" stroke-width="1"/><line x1="1010.46" y1="512" x2="1010.46" y2="433.6" stroke="#4a5a67" stroke-width="1" stroke-dasharray="9 3.4"/><line x1="1010.46" y1="512" x2="1010.46" y2="516.5" stroke="#a9b6bf" stroke-width="1"/><line x1="1053.25" y1="512" x2="1053.25" y2="433.6" stroke="#4a5a67" stroke-width="1" stroke-dasharray="9 3.4"/><line x1="1053.25" y1="512" x2="1053.25" y2="516.5" stroke="#a9b6bf" stroke-width="1"/><line x1="1096.03" y1="512" x2="1096.03" y2="516.5" stroke="#a9b6bf" stroke-width="1"/><text x="839.33" y="531.2" font-size="10" fill="#dfe6eb" stroke="#dfe6eb" stroke-width="0.28" text-anchor="middle" font-weight="normal" >05:00</text><text x="882.11" y="531.2" font-size="10" fill="#dfe6eb" stroke="#dfe6eb" stroke-width="0.28" text-anchor="middle" font-weight="normal" >04:10</text><text x="924.90" y="531.2" font-size="10" fill="#dfe6eb" stroke="#dfe6eb" stroke-width="0.28" text-anchor="middle" font-weight="normal" >03:20</text><text x="967.68" y="531.2" font-size="10" fill="#dfe6eb" stroke="#dfe6eb" stroke-width="0.28" text-anchor="middle" font-weight="normal" >02:30</text><text x="1010.46" y="531.2" font-size="10" fill="#dfe6eb" stroke="#dfe6eb" stroke-width="0.28" text-anchor="middle" font-weight="normal" >01:40</text><text x="1053.25" y="531.2" font-size="10" fill="#dfe6eb" stroke="#dfe6eb" stroke-width="0.28" text-anchor="middle" font-weight="normal" >00:50</text><text x="1096.03" y="531.2" font-size="10" fill="#dfe6eb" stroke="#dfe6eb" stroke-width="0.28" text-anchor="middle" font-weight="normal" >00:00</text><line x1="839.33" y1="433.6" x2="839.33" y2="512.7" stroke="#a9b6bf" stroke-width="1.6"/><line x1="1096.03" y1="433.6" x2="1096.03" y2="512.7" stroke="#a9b6bf" stroke-width="1.6"/><line x1="839.33" y1="512" x2="1096.03" y2="512" stroke="#a9b6bf" stroke-width="1.6"/><path d="M839.40,493.48 L843.30,512.68 L851.30,497.13 L860.00,475.75 L868.60,471.86 L880.00,471.13 L910.00,470.40 L920.00,470.40 L928.40,433.95 L937.60,446.10 L946.20,464.32 L954.80,468.46 L970.00,469.91 L990.00,470.40 L1096.00,470.40" fill="none" stroke="#1c2630" stroke-opacity="0.55" stroke-width="3.2" stroke-linejoin="round"/><path d="M839.40,493.48 L843.30,512.68 L851.30,497.13 L860.00,475.75 L868.60,471.86 L880.00,471.13 L910.00,470.40 L920.00,470.40 L928.40,433.95 L937.60,446.10 L946.20,464.32 L954.80,468.46 L970.00,469.91 L990.00,470.40 L1096.00,470.40" fill="none" stroke="#e2e8ec" stroke-width="1.1" stroke-linejoin="round"/><line x1="1096.03" y1="470.4" x2="1100.33" y2="470.4" stroke="#e2e8ec" stroke-width="1.1"/><text x="1106.53" y="474" font-size="10" fill="#f5f8fa" stroke="#f5f8fa" stroke-width="0.28" text-anchor="start" font-weight="normal" >0.0°C</text><text x="0" y="0" font-size="10.5" fill="#f5f8fa" stroke="#f5f8fa" stroke-width="0.12" text-anchor="middle" transform="translate(803.83,473) rotate(-90)">Δ°C</text><rect x="112.0" y="444.3" width="258" height="50.5" rx="3" fill="#435261"/><rect x="112.0" y="515" width="258" height="32.6" rx="3" fill="#435261"/><text x="100.0" y="474.0" font-size="12" fill="#f5f8fa" stroke="#f5f8fa" stroke-width="0.2" text-anchor="end" font-weight="normal" >State</text><text x="100.0" y="536.0" font-size="12" fill="#f5f8fa" stroke="#f5f8fa" stroke-width="0.2" text-anchor="end" font-weight="normal" >Prediction</text><text x="157.5" y="466.7" font-size="12" fill="#f5f8fa" stroke="#f5f8fa" stroke-width="0.1" text-anchor="middle" font-weight="bold" >Current:</text><text x="157.5" y="484.0" font-size="12" fill="#f5f8fa" stroke="#f5f8fa" stroke-width="0.2" text-anchor="middle" font-weight="normal" >34.34°C</text><text x="241.0" y="466.7" font-size="12" fill="#f5f8fa" stroke="#f5f8fa" stroke-width="0.1" text-anchor="middle" font-weight="bold" >Target:</text><text x="241.0" y="484.0" font-size="12" fill="#f5f8fa" stroke="#f5f8fa" stroke-width="0.2" text-anchor="middle" font-weight="normal" >40.00°C</text><text x="324.0" y="466.7" font-size="12" fill="#f5f8fa" stroke="#f5f8fa" stroke-width="0.1" text-anchor="middle" font-weight="bold" >Delta:</text><text x="324.0" y="484.0" font-size="12" fill="#f5f8fa" stroke="#f5f8fa" stroke-width="0.2" text-anchor="middle" font-weight="normal" >0.11°C/s</text><text x="241.0" y="536.0" font-size="12" fill="#f5f8fa" stroke="#f5f8fa" stroke-width="0.2" text-anchor="middle" font-weight="normal" >~53s to reach</text><rect x="495.67" y="444.3" width="258" height="50.5" rx="3" fill="#435261"/><rect x="495.67" y="515" width="258" height="32.6" rx="3" fill="#435261"/><text x="483.67" y="474.0" font-size="12" fill="#f5f8fa" stroke="#f5f8fa" stroke-width="0.2" text-anchor="end" font-weight="normal" >State</text><text x="483.67" y="536.0" font-size="12" fill="#f5f8fa" stroke="#f5f8fa" stroke-width="0.2" text-anchor="end" font-weight="normal" >Prediction</text><text x="541.1700000000001" y="466.7" font-size="12" fill="#f5f8fa" stroke="#f5f8fa" stroke-width="0.1" text-anchor="middle" font-weight="bold" >Current:</text><text x="541.1700000000001" y="484.0" font-size="12" fill="#f5f8fa" stroke="#f5f8fa" stroke-width="0.2" text-anchor="middle" font-weight="normal" >3.13°C</text><text x="624.6700000000001" y="466.7" font-size="12" fill="#f5f8fa" stroke="#f5f8fa" stroke-width="0.1" text-anchor="middle" font-weight="bold" >Target:</text><text x="624.6700000000001" y="484.0" font-size="12" fill="#f5f8fa" stroke="#f5f8fa" stroke-width="0.2" text-anchor="middle" font-weight="normal" >2.00°C</text><text x="707.6700000000001" y="466.7" font-size="12" fill="#f5f8fa" stroke="#f5f8fa" stroke-width="0.1" text-anchor="middle" font-weight="bold" >Delta:</text><text x="707.6700000000001" y="484.0" font-size="12" fill="#f5f8fa" stroke="#f5f8fa" stroke-width="0.2" text-anchor="middle" font-weight="normal" >0.01°C/s</text><text x="624.6700000000001" y="536.0" font-size="12" fill="#f5f8fa" stroke="#f5f8fa" stroke-width="0.2" text-anchor="middle" font-weight="normal" textLength="226" lengthAdjust="spacing">Hotter than target, and temperature rising.</text><g filter="url(#pshadow)"><path d="M701.5,79 Q701.5,76 704.5,76 L899.5,76 L906.8,68.6 Q908.75,66.8 910.7,68.6 L918,76 L1113.5,76 Q1116.5,76 1116.5,79 L1116.5,320 Q1116.5,323 1113.5,323 L704.5,323 Q701.5,323 701.5,320 Z" fill="#30404d" stroke="#1e2830" stroke-width="1"/></g><rect x="771" y="97" width="328" height="40" rx="3" fill="#435261"/><text x="718.7" y="122.2" font-size="12" fill="#f5f8fa" stroke="#f5f8fa" stroke-width="0.2" text-anchor="start" font-weight="normal" >Name</text><rect x="771" y="153" width="328" height="48.5" rx="3" fill="#435261"/><text x="718.7" y="182.9" font-size="12" fill="#f5f8fa" stroke="#f5f8fa" stroke-width="0.2" text-anchor="start" font-weight="normal" >Limits</text><rect x="771" y="214" width="328" height="40" rx="3" fill="#435261"/><text x="718.7" y="238.9" font-size="12" fill="#f5f8fa" stroke="#f5f8fa" stroke-width="0.2" text-anchor="start" font-weight="normal" >Target</text><rect x="771" y="266" width="328" height="40" rx="3" fill="#435261"/><text x="718.7" y="290.9" font-size="12" fill="#f5f8fa" stroke="#f5f8fa" stroke-width="0.2" text-anchor="start" font-weight="normal" >Sensor</text><rect x="780.8" y="105.2" width="308.7" height="24.6" rx="3" fill="#35414d" stroke="#2a343e" stroke-width="1"/><text x="788.9" y="121.8" font-size="12" fill="#f5f8fa" stroke="#f5f8fa" stroke-width="0.2" text-anchor="start" font-weight="normal" >Chiller</text><rect x="783" y="164.3" width="301" height="7.2" rx="3.6" fill="#33414d"/><rect x="785.5" y="165.5" width="6" height="5" rx="2.5" fill="#2b8ad0"/><rect x="799.3" y="165.5" width="11.7" height="5" rx="1" fill="#16a064"/><rect x="818.2" y="165.5" width="10.2" height="5" rx="1" fill="#e08f2c"/><rect x="835" y="165.5" width="247.5" height="5" rx="2.5" fill="#e03a3a"/><rect x="780.5" y="160.8" width="7.2" height="14.1" rx="2" fill="#394956" stroke="#283540" stroke-width="0.9"/><rect x="791.8" y="160.8" width="7.9" height="14.1" rx="2" fill="#394956" stroke="#283540" stroke-width="0.9"/><rect x="810.6" y="160.8" width="7.6" height="14.1" rx="2" fill="#394956" stroke="#283540" stroke-width="0.9"/><rect x="828.4" y="160.8" width="6.9" height="14.1" rx="2" fill="#394956" stroke="#283540" stroke-width="0.9"/><g filter="url(#lshadow)"><rect x="780.1" y="178.3" width="11.299999999999955" height="12.3" rx="2" fill="#e1e8ed"/></g><text x="785.75" y="187.8" font-size="10" fill="#394b59" stroke="#394b59" stroke-width="0.28" text-anchor="middle" font-weight="normal" >0</text><g filter="url(#lshadow)"><rect x="791.4" y="178.3" width="13.100000000000023" height="12.3" rx="2" fill="#e1e8ed"/></g><text x="797.95" y="187.8" font-size="10" fill="#394b59" stroke="#394b59" stroke-width="0.28" text-anchor="middle" font-weight="normal" >4</text><g filter="url(#lshadow)"><rect x="804.1" y="178.3" width="13.399999999999977" height="12.3" rx="2" fill="#e1e8ed"/></g><text x="810.8" y="187.8" font-size="10" fill="#394b59" stroke="#394b59" stroke-width="0.28" text-anchor="middle" font-weight="normal" >8</text><g filter="url(#lshadow)"><rect x="819.2" y="178.3" width="18.5" height="12.3" rx="2" fill="#e1e8ed"/></g><text x="828.45" y="187.8" font-size="10" fill="#394b59" stroke="#394b59" stroke-width="0.28" text-anchor="middle" font-weight="normal" >14</text><text x="844.8" y="187.8" font-size="10" fill="#f5f8fa" stroke="#f5f8fa" stroke-width="0.28" text-anchor="middle" font-weight="normal" >20</text><text x="904.1" y="187.8" font-size="10" fill="#f5f8fa" stroke="#f5f8fa" stroke-width="0.28" text-anchor="middle" font-weight="normal" >40</text><text x="963.4" y="187.8" font-size="10" fill="#f5f8fa" stroke="#f5f8fa" stroke-width="0.28" text-anchor="middle" font-weight="normal" >60</text><text x="1022.7" y="187.8" font-size="10" fill="#f5f8fa" stroke="#f5f8fa" stroke-width="0.28" text-anchor="middle" font-weight="normal" >80</text><text x="1082.0" y="187.8" font-size="10" fill="#f5f8fa" stroke="#f5f8fa" stroke-width="0.28" text-anchor="middle" font-weight="normal" >100</text><rect x="780.8" y="221.4" width="139" height="25.8" rx="3" fill="#35414d" stroke="#2a7bc0" stroke-width="1.6"/><text x="789.2" y="238.6" font-size="12" fill="#f5f8fa" stroke="#f5f8fa" stroke-width="0.2" text-anchor="start" font-weight="normal" >2.00</text><rect x="813.6" y="228" width="1" height="13" fill="#f5f8fa"/><rect x="920" y="221.4" width="24.5" height="25.8" rx="2" fill="url(#selg)" stroke="#2e3a45" stroke-width="0.9"/><line x1="920" y1="234.6" x2="944.5" y2="234.6" stroke="#2a3540" stroke-width="1"/><path d="M928.3,230 L932.2,226.5 L936.1,230" fill="none" stroke="#bfccd6" stroke-width="1.3"/><path d="M928.3,238.6 L932.2,242.1 L936.1,238.6" fill="none" stroke="#bfccd6" stroke-width="1.3"/><rect x="780.6" y="273.3" width="83.9" height="26.1" rx="3" fill="url(#selg)" stroke="#2e3a45" stroke-width="1"/><text x="789.1" y="290.8" font-size="12" fill="#f5f8fa" stroke="#f5f8fa" stroke-width="0.2" text-anchor="start" font-weight="normal" >Stainless</text><path d="M845.6,285.6 L849.25,281 L852.9,285.6 Z M845.6,287.3 L849.25,291.8 L852.9,287.3 Z" fill="#a7b6c2"/></svg>
</body></html>
